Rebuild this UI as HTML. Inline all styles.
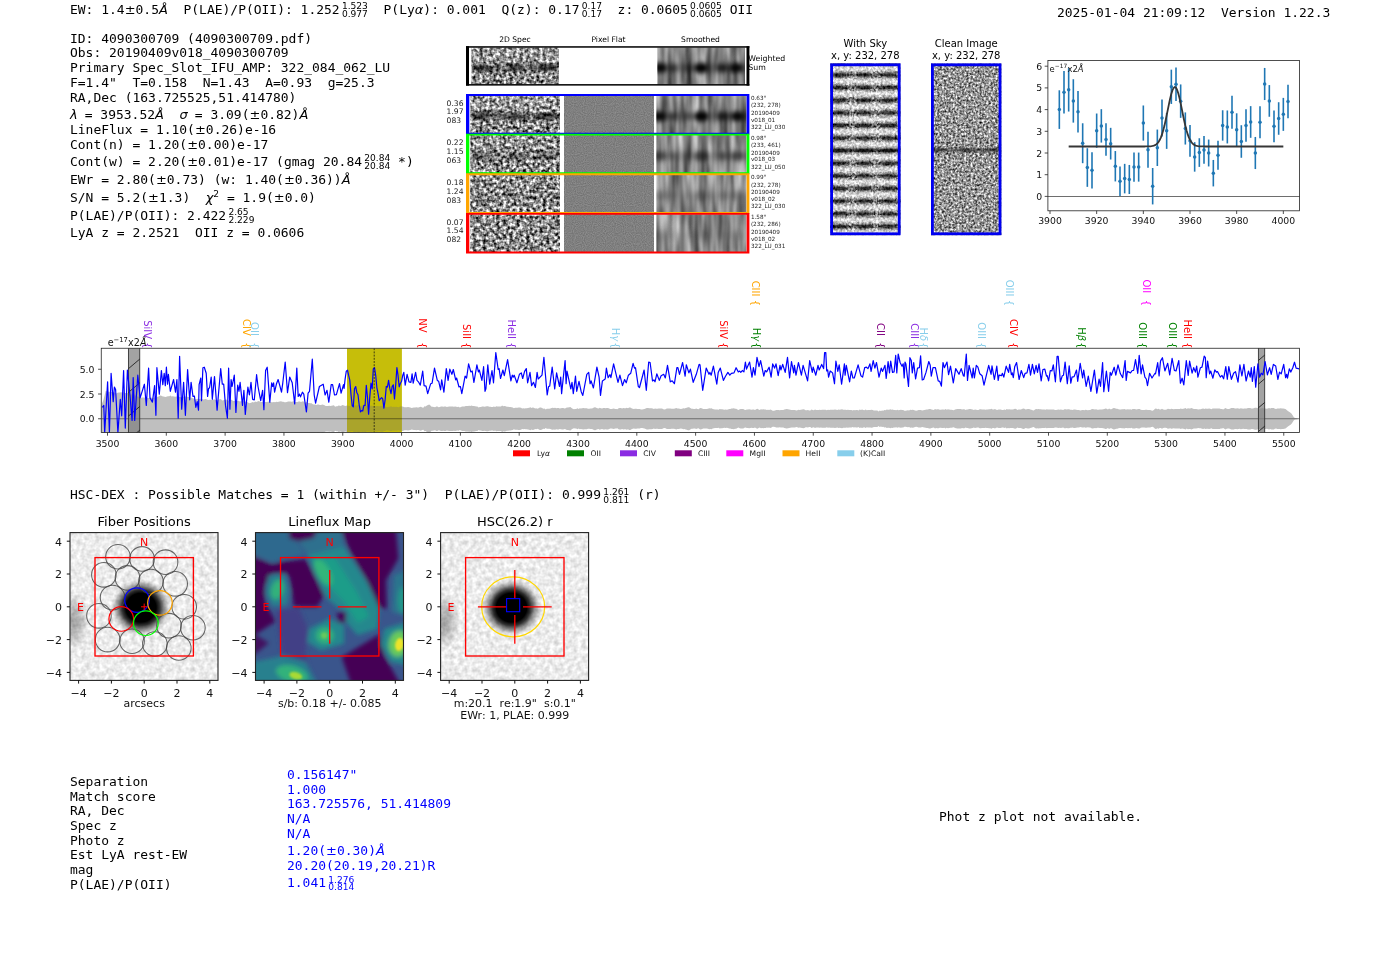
<!DOCTYPE html>
<html lang="en"><head><meta charset="utf-8"><title>ELiXer detection report 4090300709</title>
<style>
html,body{margin:0;padding:0;background:#fff;}
body{width:1400px;height:953px;overflow:hidden;}
svg{display:block;will-change:transform;}
.m{font-family:"DejaVu Sans Mono","Liberation Mono",monospace;}
.s{font-family:"DejaVu Sans","Liberation Sans",sans-serif;}
.si{font-family:"DejaVu Sans","Liberation Sans",sans-serif;font-style:oblique;}
</style></head><body>

<svg width="1400" height="953" viewBox="0 0 1400 953">

<rect width="1400" height="953" fill="#fff"/>

<g id="toptext">
<text x="70.00" y="13.90" class="m" font-size="12.975" fill="#000" xml:space="preserve">EW: 1.4</text><text x="124.68" y="13.90" class="s" font-size="12.975" fill="#000">±</text><text x="135.55" y="13.90" class="m" font-size="12.975" fill="#000" xml:space="preserve">0.5</text><text x="158.99" y="13.90" class="si" font-size="12.975" fill="#000">Å</text><text x="167.86" y="13.90" class="m" font-size="12.975" fill="#000" xml:space="preserve">  P(LAE)/P(OII): 1.252</text><text x="341.91" y="8.71" class="s" font-size="9.08" fill="#000">1.523</text><text x="341.91" y="16.69" class="s" font-size="9.08" fill="#000">0.977</text><text x="367.91" y="13.90" class="m" font-size="12.975" fill="#000" xml:space="preserve">  P(Ly</text><text x="414.78" y="13.90" class="si" font-size="12.975" fill="#000">α</text><text x="423.33" y="13.90" class="m" font-size="12.975" fill="#000" xml:space="preserve">): 0.001  Q(z): 0.17</text><text x="581.76" y="8.71" class="s" font-size="9.08" fill="#000">0.17</text><text x="581.76" y="16.69" class="s" font-size="9.08" fill="#000">0.17</text><text x="601.98" y="13.90" class="m" font-size="12.975" fill="#000" xml:space="preserve">  z: 0.0605</text><text x="690.11" y="8.71" class="s" font-size="9.08" fill="#000">0.0605</text><text x="690.11" y="16.69" class="s" font-size="9.08" fill="#000">0.0605</text><text x="721.89" y="13.90" class="m" font-size="12.975" fill="#000" xml:space="preserve"> OII</text>
<text x="1057.00" y="16.80" class="m" font-size="12.975" fill="#000" xml:space="preserve">2025-01-04 21:09:12  Version 1.22.3</text>
</g><g id="lefttext">
<text x="70.00" y="42.60" class="m" font-size="12.975" fill="#000" xml:space="preserve">ID: 4090300709 (4090300709.pdf)</text>
<text x="70.00" y="56.90" class="m" font-size="12.975" fill="#000" xml:space="preserve">Obs: 20190409v018_4090300709</text>
<text x="70.00" y="71.60" class="m" font-size="12.975" fill="#000" xml:space="preserve">Primary Spec_Slot_IFU_AMP: 322_084_062_LU</text>
<text x="70.00" y="86.70" class="m" font-size="12.975" fill="#000" xml:space="preserve">F=1.4"  T=0.158  N=1.43  A=0.93  g=25.3</text>
<text x="70.00" y="101.70" class="m" font-size="12.975" fill="#000" xml:space="preserve">RA,Dec (163.725525,51.414780)</text>
<text x="70.00" y="118.60" class="si" font-size="12.975" fill="#000">λ</text><text x="76.93" y="118.60" class="m" font-size="12.975" fill="#000" xml:space="preserve"> = 3953.52</text><text x="155.04" y="118.60" class="si" font-size="12.975" fill="#000">Å</text><text x="163.92" y="118.60" class="m" font-size="12.975" fill="#000" xml:space="preserve">  </text><text x="179.54" y="118.60" class="si" font-size="12.975" fill="#000">σ</text><text x="187.01" y="118.60" class="m" font-size="12.975" fill="#000" xml:space="preserve"> = 3.09(</text><text x="249.51" y="118.60" class="s" font-size="12.975" fill="#000">±</text><text x="260.38" y="118.60" class="m" font-size="12.975" fill="#000" xml:space="preserve">0.82)</text><text x="299.43" y="118.60" class="si" font-size="12.975" fill="#000">Å</text>
<text x="70.00" y="133.80" class="m" font-size="12.975" fill="#000" xml:space="preserve">LineFlux = 1.10(</text><text x="194.98" y="133.80" class="s" font-size="12.975" fill="#000">±</text><text x="205.85" y="133.80" class="m" font-size="12.975" fill="#000" xml:space="preserve">0.26)e-16</text>
<text x="70.00" y="148.50" class="m" font-size="12.975" fill="#000" xml:space="preserve">Cont(n) = 1.20(</text><text x="187.17" y="148.50" class="s" font-size="12.975" fill="#000">±</text><text x="198.04" y="148.50" class="m" font-size="12.975" fill="#000" xml:space="preserve">0.00)e-17</text>
<text x="70.00" y="166.40" class="m" font-size="12.975" fill="#000" xml:space="preserve">Cont(w) = 2.20(</text><text x="187.17" y="166.40" class="s" font-size="12.975" fill="#000">±</text><text x="198.04" y="166.40" class="m" font-size="12.975" fill="#000" xml:space="preserve">0.01)e-17 (gmag 20.84</text><text x="364.28" y="161.21" class="s" font-size="9.08" fill="#000">20.84</text><text x="364.28" y="169.19" class="s" font-size="9.08" fill="#000">20.84</text><text x="390.28" y="166.40" class="m" font-size="12.975" fill="#000" xml:space="preserve"> *)</text>
<text x="70.00" y="184.30" class="m" font-size="12.975" fill="#000" xml:space="preserve">EWr = 2.80(</text><text x="155.92" y="184.30" class="s" font-size="12.975" fill="#000">±</text><text x="166.80" y="184.30" class="m" font-size="12.975" fill="#000" xml:space="preserve">0.73) (w: 1.40(</text><text x="283.97" y="184.30" class="s" font-size="12.975" fill="#000">±</text><text x="294.84" y="184.30" class="m" font-size="12.975" fill="#000" xml:space="preserve">0.36))</text><text x="341.71" y="184.30" class="si" font-size="12.975" fill="#000">Å</text>
<text x="70.00" y="202.40" class="m" font-size="12.975" fill="#000" xml:space="preserve">S/N = 5.2(</text><text x="148.11" y="202.40" class="s" font-size="12.975" fill="#000">±</text><text x="158.99" y="202.40" class="m" font-size="12.975" fill="#000" xml:space="preserve">1.3)  </text><text x="205.85" y="202.40" class="si" font-size="12.975" fill="#000">χ</text><text x="213.35" y="197.21" class="s" font-size="9.08" fill="#000">2</text><text x="219.13" y="202.40" class="m" font-size="12.975" fill="#000" xml:space="preserve"> = 1.9(</text><text x="273.81" y="202.40" class="s" font-size="12.975" fill="#000">±</text><text x="284.68" y="202.40" class="m" font-size="12.975" fill="#000" xml:space="preserve">0.0)</text>
<text x="70.00" y="220.00" class="m" font-size="12.975" fill="#000" xml:space="preserve">P(LAE)/P(OII): 2.422</text><text x="228.43" y="214.81" class="s" font-size="9.08" fill="#000">2.65</text><text x="228.43" y="222.79" class="s" font-size="9.08" fill="#000">2.229</text>
<text x="70.00" y="236.50" class="m" font-size="12.975" fill="#000" xml:space="preserve">LyA z = 2.2521  OII z = 0.0606</text>
</g>
<defs>
<filter id="nzA" x="0" y="0" width="100%" height="100%" color-interpolation-filters="sRGB"><feTurbulence type="fractalNoise" baseFrequency="0.3 0.3" numOctaves="2" seed="3" stitchTiles="noStitch"/><feColorMatrix type="matrix" values="1.9 0 0 0 -0.4  1.9 0 0 0 -0.4  1.9 0 0 0 -0.4  0 0 0 0 1"/><feGaussianBlur stdDeviation="0.5"/></filter>
<filter id="nzB" x="0" y="0" width="100%" height="100%" color-interpolation-filters="sRGB"><feTurbulence type="fractalNoise" baseFrequency="0.3 0.3" numOctaves="2" seed="11" stitchTiles="noStitch"/><feColorMatrix type="matrix" values="1.9 0 0 0 -0.4  1.9 0 0 0 -0.4  1.9 0 0 0 -0.4  0 0 0 0 1"/><feGaussianBlur stdDeviation="0.5"/></filter>
<filter id="nzC" x="0" y="0" width="100%" height="100%" color-interpolation-filters="sRGB"><feTurbulence type="fractalNoise" baseFrequency="0.3 0.3" numOctaves="2" seed="23" stitchTiles="noStitch"/><feColorMatrix type="matrix" values="1.9 0 0 0 -0.4  1.9 0 0 0 -0.4  1.9 0 0 0 -0.4  0 0 0 0 1"/><feGaussianBlur stdDeviation="0.5"/></filter>
<filter id="nzD" x="0" y="0" width="100%" height="100%" color-interpolation-filters="sRGB"><feTurbulence type="fractalNoise" baseFrequency="0.3 0.3" numOctaves="2" seed="37" stitchTiles="noStitch"/><feColorMatrix type="matrix" values="1.9 0 0 0 -0.4  1.9 0 0 0 -0.4  1.9 0 0 0 -0.4  0 0 0 0 1"/><feGaussianBlur stdDeviation="0.5"/></filter>
<filter id="nzE" x="0" y="0" width="100%" height="100%" color-interpolation-filters="sRGB"><feTurbulence type="fractalNoise" baseFrequency="0.3 0.3" numOctaves="2" seed="41" stitchTiles="noStitch"/><feColorMatrix type="matrix" values="1.9 0 0 0 -0.4  1.9 0 0 0 -0.4  1.9 0 0 0 -0.4  0 0 0 0 1"/><feGaussianBlur stdDeviation="0.5"/></filter>
<filter id="nzFlat" x="0" y="0" width="100%" height="100%" color-interpolation-filters="sRGB"><feTurbulence type="fractalNoise" baseFrequency="0.9" numOctaves="1" seed="5" stitchTiles="noStitch"/><feColorMatrix type="matrix" values="0.22 0 0 0 0.39  0.22 0 0 0 0.39  0.22 0 0 0 0.39  0 0 0 0 1"/></filter>
<filter id="nzSm1" x="0" y="0" width="100%" height="100%" color-interpolation-filters="sRGB"><feTurbulence type="fractalNoise" baseFrequency="0.13 0.02" numOctaves="2" seed="7" stitchTiles="noStitch"/><feColorMatrix type="matrix" values="0.85 0 0 0 0.1  0.85 0 0 0 0.1  0.85 0 0 0 0.1  0 0 0 0 1"/></filter>
<filter id="nzSm2" x="0" y="0" width="100%" height="100%" color-interpolation-filters="sRGB"><feTurbulence type="fractalNoise" baseFrequency="0.13 0.02" numOctaves="2" seed="19" stitchTiles="noStitch"/><feColorMatrix type="matrix" values="0.85 0 0 0 0.1  0.85 0 0 0 0.1  0.85 0 0 0 0.1  0 0 0 0 1"/></filter>
<filter id="nzSm3" x="0" y="0" width="100%" height="100%" color-interpolation-filters="sRGB"><feTurbulence type="fractalNoise" baseFrequency="0.13 0.02" numOctaves="2" seed="29" stitchTiles="noStitch"/><feColorMatrix type="matrix" values="0.85 0 0 0 0.1  0.85 0 0 0 0.1  0.85 0 0 0 0.1  0 0 0 0 1"/></filter>
<filter id="nzSm4" x="0" y="0" width="100%" height="100%" color-interpolation-filters="sRGB"><feTurbulence type="fractalNoise" baseFrequency="0.13 0.02" numOctaves="2" seed="31" stitchTiles="noStitch"/><feColorMatrix type="matrix" values="0.85 0 0 0 0.1  0.85 0 0 0 0.1  0.85 0 0 0 0.1  0 0 0 0 1"/></filter>
<filter id="nzSm5" x="0" y="0" width="100%" height="100%" color-interpolation-filters="sRGB"><feTurbulence type="fractalNoise" baseFrequency="0.13 0.02" numOctaves="2" seed="43" stitchTiles="noStitch"/><feColorMatrix type="matrix" values="0.85 0 0 0 0.1  0.85 0 0 0 0.1  0.85 0 0 0 0.1  0 0 0 0 1"/></filter>
<filter id="nzSky" x="0" y="0" width="100%" height="100%" color-interpolation-filters="sRGB"><feTurbulence type="fractalNoise" baseFrequency="0.42" numOctaves="2" seed="13" stitchTiles="noStitch"/><feColorMatrix type="matrix" values="2.1 0 0 0 -0.47  2.1 0 0 0 -0.47  2.1 0 0 0 -0.47  0 0 0 0 1"/><feGaussianBlur stdDeviation="0.4"/></filter>
<filter id="nzClean" x="0" y="0" width="100%" height="100%" color-interpolation-filters="sRGB"><feTurbulence type="fractalNoise" baseFrequency="0.45" numOctaves="2" seed="17" stitchTiles="noStitch"/><feColorMatrix type="matrix" values="1.45 0 0 0 -0.14  1.45 0 0 0 -0.14  1.45 0 0 0 -0.14  0 0 0 0 1"/><feGaussianBlur stdDeviation="0.45"/></filter>
<filter id="nzHsc" x="0" y="0" width="100%" height="100%" color-interpolation-filters="sRGB"><feTurbulence type="fractalNoise" baseFrequency="0.22" numOctaves="2" seed="9" stitchTiles="noStitch"/><feColorMatrix type="matrix" values="0.3 0 0 0 0.775  0.3 0 0 0 0.775  0.3 0 0 0 0.775  0 0 0 0 1"/><feGaussianBlur stdDeviation="0.5"/></filter>
<filter id="blur2" x="-20%" y="-20%" width="140%" height="140%"><feGaussianBlur stdDeviation="2"/></filter>
<filter id="blur3" x="-20%" y="-20%" width="140%" height="140%"><feGaussianBlur stdDeviation="3.2"/></filter>
<filter id="blur1" x="-20%" y="-20%" width="140%" height="140%"><feGaussianBlur stdDeviation="1.2"/></filter>
<filter id="blurx" x="-20%" y="-50%" width="140%" height="200%"><feGaussianBlur stdDeviation="2.2 2.8"/></filter>
<radialGradient id="gal" cx="0.5" cy="0.5" r="0.5"><stop offset="0" stop-color="#000" stop-opacity="1"/><stop offset="0.5" stop-color="#000" stop-opacity="1"/><stop offset="0.62" stop-color="#000" stop-opacity="0.8"/><stop offset="0.76" stop-color="#000" stop-opacity="0.4"/><stop offset="0.9" stop-color="#000" stop-opacity="0.1"/><stop offset="1" stop-color="#000" stop-opacity="0"/></radialGradient>
<radialGradient id="gal2" cx="0.5" cy="0.5" r="0.5"><stop offset="0" stop-color="#000" stop-opacity="0.32"/><stop offset="0.5" stop-color="#000" stop-opacity="0.2"/><stop offset="1" stop-color="#000" stop-opacity="0"/></radialGradient>
</defs>
<g id="cutouts">
<text x="515.00" y="42.20" class="s" font-size="7.6" fill="#000" text-anchor="middle" >2D Spec</text>
<text x="608.50" y="42.20" class="s" font-size="7.6" fill="#000" text-anchor="middle" >Pixel Flat</text>
<text x="700.50" y="42.20" class="s" font-size="7.6" fill="#000" text-anchor="middle" >Smoothed</text>
<rect x="466.0" y="46.2" width="283.4" height="39.39999999999999" fill="#fff"/>
<clipPath id="cpc1"><rect x="471.40" y="47.40" width="87.60" height="37.20"/></clipPath><g clip-path="url(#cpc1)">
<rect x="471.40" y="47.40" width="87.60" height="37.20" filter="url(#nzA)"/>
<g filter="url(#blur1)"><rect x="466.40" y="63.86" width="97.60" height="8.0" fill="#000" opacity="0.25"/>
<ellipse cx="481.9" cy="67.9" rx="9.0" ry="3.8" fill="#000" opacity="0.47"/>
<ellipse cx="515.2" cy="67.9" rx="8.0" ry="3.8" fill="#000" opacity="0.47"/>
<ellipse cx="546.7" cy="67.9" rx="10.0" ry="3.8" fill="#000" opacity="0.47"/>
<ellipse cx="497.7" cy="67.9" rx="4.0" ry="3.8" fill="#000" opacity="0.19"/>
</g>
<rect x="471.40" y="47.40" width="87.60" height="14.46" fill="#fff" opacity="0.12"/>
</g>
<clipPath id="cpc2"><rect x="657.40" y="47.40" width="87.60" height="37.20"/></clipPath><g clip-path="url(#cpc2)">
<rect x="657.40" y="47.40" width="87.60" height="37.20" filter="url(#nzSm1)"/>
<g filter="url(#blurx)" opacity="1.00">
<rect x="651.4" y="63.4" width="99.6" height="9" fill="#000" opacity="0.28"/>
<ellipse cx="660.0" cy="67.9" rx="6.9" ry="5.1" fill="#000" opacity="0.95"/>
<ellipse cx="673.2" cy="67.9" rx="4.6" ry="3.4" fill="#000" opacity="0.45"/>
<ellipse cx="688.9" cy="67.9" rx="4.0" ry="3.0" fill="#000" opacity="0.35"/>
<ellipse cx="701.2" cy="67.9" rx="7.1" ry="5.3" fill="#000" opacity="1.0"/>
<ellipse cx="722.2" cy="67.9" rx="5.8" ry="4.2" fill="#000" opacity="0.7"/>
<ellipse cx="736.2" cy="67.9" rx="6.9" ry="5.1" fill="#000" opacity="0.95"/>
</g>
</g>
<rect x="466.0" y="46.2" width="3.0" height="39.39999999999999" fill="#000"/>
<rect x="746.5" y="46.2" width="2.9" height="39.39999999999999" fill="#000"/>
<rect x="466.0" y="46.2" width="283.4" height="1.5" fill="#000"/>
<rect x="466.0" y="84.1" width="283.4" height="1.5" fill="#000"/>
<text x="748.30" y="61.20" class="s" font-size="7.8" fill="#000" text-anchor="start" >Weighted</text>
<text x="748.30" y="69.90" class="s" font-size="7.8" fill="#000" text-anchor="start" >Sum</text>
<rect x="466.0" y="94.00" width="283.4" height="39.65" fill="#fff"/>
<clipPath id="cpc3"><rect x="470.30" y="95.20" width="89.70" height="38.45"/></clipPath><g clip-path="url(#cpc3)">
<rect x="470.30" y="95.20" width="89.70" height="38.45" filter="url(#nzB)"/>
<g filter="url(#blur1)"><rect x="465.30" y="112.35" width="99.70" height="8.0" fill="#000" opacity="0.25"/>
<ellipse cx="481.1" cy="116.3" rx="9.0" ry="3.8" fill="#000" opacity="0.47"/>
<ellipse cx="515.1" cy="116.3" rx="8.0" ry="3.8" fill="#000" opacity="0.47"/>
<ellipse cx="547.4" cy="116.3" rx="10.0" ry="3.8" fill="#000" opacity="0.47"/>
<ellipse cx="497.2" cy="116.3" rx="4.0" ry="3.8" fill="#000" opacity="0.19"/>
</g>
<rect x="470.30" y="95.20" width="89.70" height="15.15" fill="#fff" opacity="0.12"/>
</g>
<rect x="564" y="95.20" width="89.9" height="38.45" filter="url(#nzFlat)"/>
<clipPath id="cpc4"><rect x="656.40" y="95.20" width="90.00" height="38.45"/></clipPath><g clip-path="url(#cpc4)">
<rect x="656.40" y="95.20" width="90.00" height="38.45" filter="url(#nzSm2)"/>
<g filter="url(#blurx)" opacity="1.00">
<rect x="650.4" y="111.8" width="102.0" height="9" fill="#000" opacity="0.28"/>
<ellipse cx="659.1" cy="116.3" rx="6.9" ry="5.1" fill="#000" opacity="0.95"/>
<ellipse cx="672.6" cy="116.3" rx="4.6" ry="3.4" fill="#000" opacity="0.45"/>
<ellipse cx="688.8" cy="116.3" rx="4.0" ry="3.0" fill="#000" opacity="0.35"/>
<ellipse cx="701.4" cy="116.3" rx="7.1" ry="5.3" fill="#000" opacity="1.0"/>
<ellipse cx="723.0" cy="116.3" rx="5.8" ry="4.2" fill="#000" opacity="0.7"/>
<ellipse cx="737.4" cy="116.3" rx="6.9" ry="5.1" fill="#000" opacity="0.95"/>
</g>
</g>
<rect x="466.0" y="133.65" width="283.4" height="39.65" fill="#fff"/>
<clipPath id="cpc5"><rect x="470.30" y="134.85" width="89.70" height="38.45"/></clipPath><g clip-path="url(#cpc5)">
<rect x="470.30" y="134.85" width="89.70" height="38.45" filter="url(#nzC)"/>
<g filter="url(#blur1)"><rect x="465.30" y="152.00" width="99.70" height="8.0" fill="#000" opacity="0.14"/>
<ellipse cx="481.1" cy="156.0" rx="9.0" ry="3.8" fill="#000" opacity="0.27"/>
<ellipse cx="515.1" cy="156.0" rx="8.0" ry="3.8" fill="#000" opacity="0.27"/>
<ellipse cx="547.4" cy="156.0" rx="10.0" ry="3.8" fill="#000" opacity="0.27"/>
<ellipse cx="497.2" cy="156.0" rx="4.0" ry="3.8" fill="#000" opacity="0.11"/>
</g>
<rect x="470.30" y="134.85" width="89.70" height="15.15" fill="#fff" opacity="0.07"/>
</g>
<rect x="564" y="134.85" width="89.9" height="38.45" filter="url(#nzFlat)"/>
<clipPath id="cpc6"><rect x="656.40" y="134.85" width="90.00" height="38.45"/></clipPath><g clip-path="url(#cpc6)">
<rect x="656.40" y="134.85" width="90.00" height="38.45" filter="url(#nzSm3)"/>
<g filter="url(#blurx)" opacity="0.60">
<rect x="650.4" y="151.5" width="102.0" height="9" fill="#000" opacity="0.28"/>
<ellipse cx="659.1" cy="156.0" rx="6.9" ry="5.1" fill="#000" opacity="0.95"/>
<ellipse cx="672.6" cy="156.0" rx="4.6" ry="3.4" fill="#000" opacity="0.45"/>
<ellipse cx="688.8" cy="156.0" rx="4.0" ry="3.0" fill="#000" opacity="0.35"/>
<ellipse cx="701.4" cy="156.0" rx="7.1" ry="5.3" fill="#000" opacity="1.0"/>
<ellipse cx="723.0" cy="156.0" rx="5.8" ry="4.2" fill="#000" opacity="0.7"/>
<ellipse cx="737.4" cy="156.0" rx="6.9" ry="5.1" fill="#000" opacity="0.95"/>
</g>
</g>
<rect x="466.0" y="173.30" width="283.4" height="39.65" fill="#fff"/>
<clipPath id="cpc7"><rect x="470.30" y="174.50" width="89.70" height="38.45"/></clipPath><g clip-path="url(#cpc7)">
<rect x="470.30" y="174.50" width="89.70" height="38.45" filter="url(#nzD)"/>
<g filter="url(#blur1)"><rect x="465.30" y="191.65" width="99.70" height="8.0" fill="#000" opacity="0.04"/>
<ellipse cx="481.1" cy="195.6" rx="9.0" ry="3.8" fill="#000" opacity="0.08"/>
<ellipse cx="515.1" cy="195.6" rx="8.0" ry="3.8" fill="#000" opacity="0.08"/>
<ellipse cx="547.4" cy="195.6" rx="10.0" ry="3.8" fill="#000" opacity="0.08"/>
<ellipse cx="497.2" cy="195.6" rx="4.0" ry="3.8" fill="#000" opacity="0.03"/>
</g>
<rect x="470.30" y="174.50" width="89.70" height="15.15" fill="#fff" opacity="0.02"/>
</g>
<rect x="564" y="174.50" width="89.9" height="38.45" filter="url(#nzFlat)"/>
<clipPath id="cpc8"><rect x="656.40" y="174.50" width="90.00" height="38.45"/></clipPath><g clip-path="url(#cpc8)">
<rect x="656.40" y="174.50" width="90.00" height="38.45" filter="url(#nzSm4)"/>
<g filter="url(#blurx)" opacity="0.25">
<rect x="650.4" y="191.1" width="102.0" height="9" fill="#000" opacity="0.28"/>
<ellipse cx="659.1" cy="195.6" rx="6.9" ry="5.1" fill="#000" opacity="0.95"/>
<ellipse cx="672.6" cy="195.6" rx="4.6" ry="3.4" fill="#000" opacity="0.45"/>
<ellipse cx="688.8" cy="195.6" rx="4.0" ry="3.0" fill="#000" opacity="0.35"/>
<ellipse cx="701.4" cy="195.6" rx="7.1" ry="5.3" fill="#000" opacity="1.0"/>
<ellipse cx="723.0" cy="195.6" rx="5.8" ry="4.2" fill="#000" opacity="0.7"/>
<ellipse cx="737.4" cy="195.6" rx="6.9" ry="5.1" fill="#000" opacity="0.95"/>
</g>
</g>
<rect x="466.0" y="212.95" width="283.4" height="39.65" fill="#fff"/>
<clipPath id="cpc9"><rect x="470.30" y="214.15" width="89.70" height="38.45"/></clipPath><g clip-path="url(#cpc9)">
<rect x="470.30" y="214.15" width="89.70" height="38.45" filter="url(#nzE)"/>
</g>
<rect x="564" y="214.15" width="89.9" height="38.45" filter="url(#nzFlat)"/>
<clipPath id="cpc10"><rect x="656.40" y="214.15" width="90.00" height="38.45"/></clipPath><g clip-path="url(#cpc10)">
<rect x="656.40" y="214.15" width="90.00" height="38.45" filter="url(#nzSm5)"/>
<g filter="url(#blurx)" opacity="0.12">
<rect x="650.4" y="230.8" width="102.0" height="9" fill="#000" opacity="0.28"/>
<ellipse cx="659.1" cy="235.3" rx="6.9" ry="5.1" fill="#000" opacity="0.95"/>
<ellipse cx="672.6" cy="235.3" rx="4.6" ry="3.4" fill="#000" opacity="0.45"/>
<ellipse cx="688.8" cy="235.3" rx="4.0" ry="3.0" fill="#000" opacity="0.35"/>
<ellipse cx="701.4" cy="235.3" rx="7.1" ry="5.3" fill="#000" opacity="1.0"/>
<ellipse cx="723.0" cy="235.3" rx="5.8" ry="4.2" fill="#000" opacity="0.7"/>
<ellipse cx="737.4" cy="235.3" rx="6.9" ry="5.1" fill="#000" opacity="0.95"/>
</g>
</g>
<path fill="#0000ff" fill-rule="evenodd" d="M466.0,94.00H749.4V134.55H466.0Z M469.3,95.90H746.6V132.65H469.3Z"/>
<text x="446.60" y="105.60" class="s" font-size="7.6" fill="#222" text-anchor="start" >0.36</text>
<text x="446.60" y="114.45" class="s" font-size="7.6" fill="#222" text-anchor="start" >1.97</text>
<text x="446.60" y="123.30" class="s" font-size="7.6" fill="#222" text-anchor="start" >083</text>
<text x="750.90" y="100.00" class="s" font-size="5.7" fill="#222" text-anchor="start" >0.63"</text>
<text x="750.90" y="107.40" class="s" font-size="5.7" fill="#222" text-anchor="start" >(232, 278)</text>
<text x="750.90" y="114.90" class="s" font-size="5.7" fill="#222" text-anchor="start" >20190409</text>
<text x="750.90" y="121.70" class="s" font-size="5.7" fill="#222" text-anchor="start" >v018_01</text>
<text x="750.90" y="129.10" class="s" font-size="5.7" fill="#222" text-anchor="start" >322_LU_030</text>
<path fill="#00ff00" fill-rule="evenodd" d="M466.0,133.65H749.4V174.20H466.0Z M469.3,135.55H746.6V172.30H469.3Z"/>
<text x="446.60" y="145.25" class="s" font-size="7.6" fill="#222" text-anchor="start" >0.22</text>
<text x="446.60" y="154.10" class="s" font-size="7.6" fill="#222" text-anchor="start" >1.15</text>
<text x="446.60" y="162.95" class="s" font-size="7.6" fill="#222" text-anchor="start" >063</text>
<text x="750.90" y="139.65" class="s" font-size="5.7" fill="#222" text-anchor="start" >0.98"</text>
<text x="750.90" y="147.05" class="s" font-size="5.7" fill="#222" text-anchor="start" >(233, 461)</text>
<text x="750.90" y="154.55" class="s" font-size="5.7" fill="#222" text-anchor="start" >20190409</text>
<text x="750.90" y="161.35" class="s" font-size="5.7" fill="#222" text-anchor="start" >v018_03</text>
<text x="750.90" y="168.75" class="s" font-size="5.7" fill="#222" text-anchor="start" >322_LU_050</text>
<path fill="#ffa500" fill-rule="evenodd" d="M466.0,173.30H749.4V213.85H466.0Z M469.3,175.20H746.6V211.95H469.3Z"/>
<text x="446.60" y="184.90" class="s" font-size="7.6" fill="#222" text-anchor="start" >0.18</text>
<text x="446.60" y="193.75" class="s" font-size="7.6" fill="#222" text-anchor="start" >1.24</text>
<text x="446.60" y="202.60" class="s" font-size="7.6" fill="#222" text-anchor="start" >083</text>
<text x="750.90" y="179.30" class="s" font-size="5.7" fill="#222" text-anchor="start" >0.99"</text>
<text x="750.90" y="186.70" class="s" font-size="5.7" fill="#222" text-anchor="start" >(232, 278)</text>
<text x="750.90" y="194.20" class="s" font-size="5.7" fill="#222" text-anchor="start" >20190409</text>
<text x="750.90" y="201.00" class="s" font-size="5.7" fill="#222" text-anchor="start" >v018_02</text>
<text x="750.90" y="208.40" class="s" font-size="5.7" fill="#222" text-anchor="start" >322_LU_030</text>
<path fill="#ff0000" fill-rule="evenodd" d="M466.0,212.95H749.4V253.50H466.0Z M469.3,214.85H746.6V251.60H469.3Z"/>
<text x="446.60" y="224.55" class="s" font-size="7.6" fill="#222" text-anchor="start" >0.07</text>
<text x="446.60" y="233.40" class="s" font-size="7.6" fill="#222" text-anchor="start" >1.54</text>
<text x="446.60" y="242.25" class="s" font-size="7.6" fill="#222" text-anchor="start" >082</text>
<text x="750.90" y="218.95" class="s" font-size="5.7" fill="#222" text-anchor="start" >1.58"</text>
<text x="750.90" y="226.35" class="s" font-size="5.7" fill="#222" text-anchor="start" >(232, 286)</text>
<text x="750.90" y="233.85" class="s" font-size="5.7" fill="#222" text-anchor="start" >20190409</text>
<text x="750.90" y="240.65" class="s" font-size="5.7" fill="#222" text-anchor="start" >v018_02</text>
<text x="750.90" y="248.05" class="s" font-size="5.7" fill="#222" text-anchor="start" >322_LU_031</text>
</g>
<g id="skyclean">
<text x="865.30" y="47.40" class="s" font-size="10.0" fill="#000" text-anchor="middle" >With Sky</text>
<text x="865.30" y="58.60" class="s" font-size="10.0" fill="#000" text-anchor="middle" >x, y: 232, 278</text>
<text x="966.20" y="47.40" class="s" font-size="10.0" fill="#000" text-anchor="middle" >Clean Image</text>
<text x="966.20" y="58.60" class="s" font-size="10.0" fill="#000" text-anchor="middle" >x, y: 232, 278</text>
<clipPath id="cpSky"><rect x="830.2" y="63.4" width="70.39999999999998" height="171.79999999999998"/></clipPath>
<g clip-path="url(#cpSky)">
<rect x="830.2" y="63.4" width="70.39999999999998" height="171.79999999999998" filter="url(#nzSky)"/>
<g filter="url(#blur1)"><rect x="826.2" y="59.58" width="78.39999999999998" height="5.6" fill="#000" opacity="0.3"/><rect x="826.2" y="65.79" width="78.39999999999998" height="5.8" fill="#fff" opacity="0.68"/><ellipse cx="839.4" cy="62.38" rx="8.5" ry="3.4" fill="#000" opacity="0.6"/><ellipse cx="864.0" cy="62.38" rx="8.5" ry="3.4" fill="#000" opacity="0.6"/><ellipse cx="888.6" cy="62.38" rx="8.5" ry="3.4" fill="#000" opacity="0.6"/><rect x="826.2" y="72.20" width="78.39999999999998" height="5.6" fill="#000" opacity="0.3"/><rect x="826.2" y="78.41" width="78.39999999999998" height="5.8" fill="#fff" opacity="0.68"/><ellipse cx="839.4" cy="75.00" rx="8.5" ry="3.4" fill="#000" opacity="0.6"/><ellipse cx="864.0" cy="75.00" rx="8.5" ry="3.4" fill="#000" opacity="0.6"/><ellipse cx="888.6" cy="75.00" rx="8.5" ry="3.4" fill="#000" opacity="0.6"/><rect x="826.2" y="84.82" width="78.39999999999998" height="5.6" fill="#000" opacity="0.3"/><rect x="826.2" y="91.03" width="78.39999999999998" height="5.8" fill="#fff" opacity="0.68"/><ellipse cx="839.4" cy="87.62" rx="8.5" ry="3.4" fill="#000" opacity="0.6"/><ellipse cx="864.0" cy="87.62" rx="8.5" ry="3.4" fill="#000" opacity="0.6"/><ellipse cx="888.6" cy="87.62" rx="8.5" ry="3.4" fill="#000" opacity="0.6"/><rect x="826.2" y="97.44" width="78.39999999999998" height="5.6" fill="#000" opacity="0.3"/><rect x="826.2" y="103.65" width="78.39999999999998" height="5.8" fill="#fff" opacity="0.68"/><ellipse cx="839.4" cy="100.24" rx="8.5" ry="3.4" fill="#000" opacity="0.6"/><ellipse cx="864.0" cy="100.24" rx="8.5" ry="3.4" fill="#000" opacity="0.6"/><ellipse cx="888.6" cy="100.24" rx="8.5" ry="3.4" fill="#000" opacity="0.6"/><rect x="826.2" y="110.06" width="78.39999999999998" height="5.6" fill="#000" opacity="0.3"/><rect x="826.2" y="116.27" width="78.39999999999998" height="5.8" fill="#fff" opacity="0.68"/><ellipse cx="839.4" cy="112.86" rx="8.5" ry="3.4" fill="#000" opacity="0.6"/><ellipse cx="864.0" cy="112.86" rx="8.5" ry="3.4" fill="#000" opacity="0.6"/><ellipse cx="888.6" cy="112.86" rx="8.5" ry="3.4" fill="#000" opacity="0.6"/><rect x="826.2" y="122.68" width="78.39999999999998" height="5.6" fill="#000" opacity="0.3"/><rect x="826.2" y="128.89" width="78.39999999999998" height="5.8" fill="#fff" opacity="0.68"/><ellipse cx="839.4" cy="125.48" rx="8.5" ry="3.4" fill="#000" opacity="0.6"/><ellipse cx="864.0" cy="125.48" rx="8.5" ry="3.4" fill="#000" opacity="0.6"/><ellipse cx="888.6" cy="125.48" rx="8.5" ry="3.4" fill="#000" opacity="0.6"/><rect x="826.2" y="135.30" width="78.39999999999998" height="5.6" fill="#000" opacity="0.3"/><rect x="826.2" y="141.51" width="78.39999999999998" height="5.8" fill="#fff" opacity="0.68"/><ellipse cx="839.4" cy="138.10" rx="8.5" ry="3.4" fill="#000" opacity="0.6"/><ellipse cx="864.0" cy="138.10" rx="8.5" ry="3.4" fill="#000" opacity="0.6"/><ellipse cx="888.6" cy="138.10" rx="8.5" ry="3.4" fill="#000" opacity="0.6"/><rect x="826.2" y="147.92" width="78.39999999999998" height="5.6" fill="#000" opacity="0.3"/><rect x="826.2" y="154.13" width="78.39999999999998" height="5.8" fill="#fff" opacity="0.68"/><ellipse cx="839.4" cy="150.72" rx="8.5" ry="3.4" fill="#000" opacity="0.6"/><ellipse cx="864.0" cy="150.72" rx="8.5" ry="3.4" fill="#000" opacity="0.6"/><ellipse cx="888.6" cy="150.72" rx="8.5" ry="3.4" fill="#000" opacity="0.6"/><rect x="826.2" y="160.54" width="78.39999999999998" height="5.6" fill="#000" opacity="0.3"/><rect x="826.2" y="166.75" width="78.39999999999998" height="5.8" fill="#fff" opacity="0.68"/><ellipse cx="839.4" cy="163.34" rx="8.5" ry="3.4" fill="#000" opacity="0.6"/><ellipse cx="864.0" cy="163.34" rx="8.5" ry="3.4" fill="#000" opacity="0.6"/><ellipse cx="888.6" cy="163.34" rx="8.5" ry="3.4" fill="#000" opacity="0.6"/><rect x="826.2" y="173.16" width="78.39999999999998" height="5.6" fill="#000" opacity="0.3"/><rect x="826.2" y="179.37" width="78.39999999999998" height="5.8" fill="#fff" opacity="0.68"/><ellipse cx="839.4" cy="175.96" rx="8.5" ry="3.4" fill="#000" opacity="0.6"/><ellipse cx="864.0" cy="175.96" rx="8.5" ry="3.4" fill="#000" opacity="0.6"/><ellipse cx="888.6" cy="175.96" rx="8.5" ry="3.4" fill="#000" opacity="0.6"/><rect x="826.2" y="185.78" width="78.39999999999998" height="5.6" fill="#000" opacity="0.3"/><rect x="826.2" y="191.99" width="78.39999999999998" height="5.8" fill="#fff" opacity="0.68"/><ellipse cx="839.4" cy="188.58" rx="8.5" ry="3.4" fill="#000" opacity="0.6"/><ellipse cx="864.0" cy="188.58" rx="8.5" ry="3.4" fill="#000" opacity="0.6"/><ellipse cx="888.6" cy="188.58" rx="8.5" ry="3.4" fill="#000" opacity="0.6"/><rect x="826.2" y="198.40" width="78.39999999999998" height="5.6" fill="#000" opacity="0.3"/><rect x="826.2" y="204.61" width="78.39999999999998" height="5.8" fill="#fff" opacity="0.68"/><ellipse cx="839.4" cy="201.20" rx="8.5" ry="3.4" fill="#000" opacity="0.6"/><ellipse cx="864.0" cy="201.20" rx="8.5" ry="3.4" fill="#000" opacity="0.6"/><ellipse cx="888.6" cy="201.20" rx="8.5" ry="3.4" fill="#000" opacity="0.6"/><rect x="826.2" y="211.02" width="78.39999999999998" height="5.6" fill="#000" opacity="0.3"/><rect x="826.2" y="217.23" width="78.39999999999998" height="5.8" fill="#fff" opacity="0.68"/><ellipse cx="839.4" cy="213.82" rx="8.5" ry="3.4" fill="#000" opacity="0.6"/><ellipse cx="864.0" cy="213.82" rx="8.5" ry="3.4" fill="#000" opacity="0.6"/><ellipse cx="888.6" cy="213.82" rx="8.5" ry="3.4" fill="#000" opacity="0.6"/><rect x="826.2" y="223.64" width="78.39999999999998" height="5.6" fill="#000" opacity="0.3"/><rect x="826.2" y="229.85" width="78.39999999999998" height="5.8" fill="#fff" opacity="0.68"/><ellipse cx="839.4" cy="226.44" rx="8.5" ry="3.4" fill="#000" opacity="0.6"/><ellipse cx="864.0" cy="226.44" rx="8.5" ry="3.4" fill="#000" opacity="0.6"/><ellipse cx="888.6" cy="226.44" rx="8.5" ry="3.4" fill="#000" opacity="0.6"/><rect x="826.2" y="236.26" width="78.39999999999998" height="5.6" fill="#000" opacity="0.3"/><rect x="826.2" y="242.47" width="78.39999999999998" height="5.8" fill="#fff" opacity="0.68"/><ellipse cx="839.4" cy="239.06" rx="8.5" ry="3.4" fill="#000" opacity="0.6"/><ellipse cx="864.0" cy="239.06" rx="8.5" ry="3.4" fill="#000" opacity="0.6"/><ellipse cx="888.6" cy="239.06" rx="8.5" ry="3.4" fill="#000" opacity="0.6"/><rect x="826.2" y="147.4" width="78.39999999999998" height="5.6" fill="#000" opacity="0.45"/></g>
</g>
<rect x="831.6" y="64.8" width="67.59999999999998" height="168.99999999999997" fill="none" stroke="#0000f0" stroke-width="2.8"/>
<clipPath id="cpClean"><rect x="931.0" y="63.4" width="70.39999999999998" height="171.79999999999998"/></clipPath><g clip-path="url(#cpClean)">
<rect x="931.0" y="63.4" width="70.39999999999998" height="171.79999999999998" filter="url(#nzClean)"/>
<g filter="url(#blur1)"><rect x="926.0" y="148.2" width="80.39999999999998" height="3.6" fill="#000" opacity="0.45"/>
<ellipse cx="938.0" cy="150" rx="7" ry="2.6" fill="#000" opacity="0.35"/>
<ellipse cx="966.2" cy="150" rx="7" ry="2.6" fill="#000" opacity="0.35"/>
<ellipse cx="994.4" cy="150" rx="7" ry="2.6" fill="#000" opacity="0.35"/>
</g></g>
<rect x="932.4" y="64.8" width="67.59999999999998" height="168.99999999999997" fill="none" stroke="#0000f0" stroke-width="2.8"/>
</g>
<g id="fit">
<rect x="1047.9" y="60.4" width="251.69999999999982" height="150.4" fill="#fff"/>
<line x1="1047.9" y1="196.40" x2="1299.6" y2="196.40" stroke="#000" stroke-width="0.8" opacity="0.8"/>
<g stroke="#1f77b4" stroke-width="1.6" fill="#1f77b4"><line x1="1059.33" y1="90.29" x2="1059.33" y2="128.91"/><line x1="1064.00" y1="70.97" x2="1064.00" y2="113.51"/><line x1="1068.67" y1="68.15" x2="1068.67" y2="111.55"/><line x1="1073.33" y1="79.22" x2="1073.33" y2="122.62"/><line x1="1078.00" y1="90.94" x2="1078.00" y2="132.60"/><line x1="1082.67" y1="123.27" x2="1082.67" y2="163.20"/><line x1="1087.33" y1="148.23" x2="1087.33" y2="186.85"/><line x1="1092.00" y1="152.13" x2="1092.00" y2="188.59"/><line x1="1096.67" y1="113.51" x2="1096.67" y2="147.79"/><line x1="1101.33" y1="109.17" x2="1101.33" y2="142.58"/><line x1="1106.00" y1="123.27" x2="1106.00" y2="155.82"/><line x1="1110.67" y1="127.83" x2="1110.67" y2="159.51"/><line x1="1115.33" y1="151.05" x2="1115.33" y2="181.43"/><line x1="1120.00" y1="166.45" x2="1120.00" y2="195.97"/><line x1="1124.67" y1="163.85" x2="1124.67" y2="193.36"/><line x1="1129.33" y1="164.94" x2="1129.33" y2="194.01"/><line x1="1134.00" y1="152.57" x2="1134.00" y2="181.64"/><line x1="1138.67" y1="152.57" x2="1138.67" y2="181.64"/><line x1="1143.33" y1="105.48" x2="1143.33" y2="140.63"/><line x1="1148.00" y1="131.73" x2="1148.00" y2="167.76"/><line x1="1152.67" y1="167.97" x2="1152.67" y2="204.43"/><line x1="1157.33" y1="129.56" x2="1157.33" y2="166.02"/><line x1="1162.00" y1="99.62" x2="1162.00" y2="136.51"/><line x1="1166.66" y1="112.86" x2="1166.66" y2="148.88"/><line x1="1171.33" y1="69.67" x2="1171.33" y2="103.96"/><line x1="1176.00" y1="67.50" x2="1176.00" y2="100.92"/><line x1="1180.66" y1="84.43" x2="1180.66" y2="117.85"/><line x1="1185.33" y1="112.42" x2="1185.33" y2="144.54"/><line x1="1190.00" y1="125.01" x2="1190.00" y2="156.69"/><line x1="1194.66" y1="142.15" x2="1194.66" y2="171.66"/><line x1="1199.33" y1="138.24" x2="1199.33" y2="166.89"/><line x1="1204.00" y1="136.07" x2="1204.00" y2="163.85"/><line x1="1208.66" y1="139.55" x2="1208.66" y2="166.45"/><line x1="1213.33" y1="159.94" x2="1213.33" y2="186.42"/><line x1="1218.00" y1="140.63" x2="1218.00" y2="169.71"/><line x1="1222.66" y1="110.25" x2="1222.66" y2="140.63"/><line x1="1227.33" y1="110.47" x2="1227.33" y2="143.45"/><line x1="1232.00" y1="95.71" x2="1232.00" y2="128.70"/><line x1="1236.66" y1="113.29" x2="1236.66" y2="146.27"/><line x1="1241.33" y1="125.22" x2="1241.33" y2="157.77"/><line x1="1246.00" y1="109.17" x2="1246.00" y2="141.72"/><line x1="1250.66" y1="106.13" x2="1250.66" y2="137.81"/><line x1="1255.33" y1="136.94" x2="1255.33" y2="169.06"/><line x1="1260.00" y1="106.13" x2="1260.00" y2="138.24"/><line x1="1264.66" y1="67.94" x2="1264.66" y2="100.05"/><line x1="1269.33" y1="85.08" x2="1269.33" y2="116.76"/><line x1="1274.00" y1="110.47" x2="1274.00" y2="142.15"/><line x1="1278.66" y1="102.22" x2="1278.66" y2="134.77"/><line x1="1283.33" y1="97.88" x2="1283.33" y2="130.87"/><line x1="1288.00" y1="84.86" x2="1288.00" y2="118.28"/></g><g fill="#1f77b4"><circle cx="1059.33" cy="109.60" r="1.75"/><circle cx="1064.00" cy="92.24" r="1.75"/><circle cx="1068.67" cy="89.85" r="1.75"/><circle cx="1073.33" cy="100.92" r="1.75"/><circle cx="1078.00" cy="111.77" r="1.75"/><circle cx="1082.67" cy="143.24" r="1.75"/><circle cx="1087.33" cy="167.54" r="1.75"/><circle cx="1092.00" cy="170.36" r="1.75"/><circle cx="1096.67" cy="130.65" r="1.75"/><circle cx="1101.33" cy="125.88" r="1.75"/><circle cx="1106.00" cy="139.55" r="1.75"/><circle cx="1110.67" cy="143.67" r="1.75"/><circle cx="1115.33" cy="166.24" r="1.75"/><circle cx="1120.00" cy="181.21" r="1.75"/><circle cx="1124.67" cy="178.61" r="1.75"/><circle cx="1129.33" cy="179.47" r="1.75"/><circle cx="1134.00" cy="167.11" r="1.75"/><circle cx="1138.67" cy="167.11" r="1.75"/><circle cx="1143.33" cy="123.05" r="1.75"/><circle cx="1148.00" cy="149.75" r="1.75"/><circle cx="1152.67" cy="186.20" r="1.75"/><circle cx="1157.33" cy="147.79" r="1.75"/><circle cx="1162.00" cy="118.06" r="1.75"/><circle cx="1166.66" cy="130.87" r="1.75"/><circle cx="1171.33" cy="86.82" r="1.75"/><circle cx="1176.00" cy="84.21" r="1.75"/><circle cx="1180.66" cy="101.14" r="1.75"/><circle cx="1185.33" cy="128.48" r="1.75"/><circle cx="1190.00" cy="140.85" r="1.75"/><circle cx="1194.66" cy="156.91" r="1.75"/><circle cx="1199.33" cy="152.57" r="1.75"/><circle cx="1204.00" cy="149.96" r="1.75"/><circle cx="1208.66" cy="153.00" r="1.75"/><circle cx="1213.33" cy="173.18" r="1.75"/><circle cx="1218.00" cy="155.17" r="1.75"/><circle cx="1222.66" cy="125.44" r="1.75"/><circle cx="1227.33" cy="126.96" r="1.75"/><circle cx="1232.00" cy="112.20" r="1.75"/><circle cx="1236.66" cy="129.78" r="1.75"/><circle cx="1241.33" cy="141.50" r="1.75"/><circle cx="1246.00" cy="125.44" r="1.75"/><circle cx="1250.66" cy="121.97" r="1.75"/><circle cx="1255.33" cy="153.00" r="1.75"/><circle cx="1260.00" cy="122.19" r="1.75"/><circle cx="1264.66" cy="83.99" r="1.75"/><circle cx="1269.33" cy="100.92" r="1.75"/><circle cx="1274.00" cy="126.31" r="1.75"/><circle cx="1278.66" cy="118.50" r="1.75"/><circle cx="1283.33" cy="114.37" r="1.75"/><circle cx="1288.00" cy="101.57" r="1.75"/></g>
<polyline points="1068.67,146.49 1069.83,146.49 1071.00,146.49 1072.17,146.49 1073.33,146.49 1074.50,146.49 1075.67,146.49 1076.83,146.49 1078.00,146.49 1079.17,146.49 1080.33,146.49 1081.50,146.49 1082.67,146.49 1083.83,146.49 1085.00,146.49 1086.17,146.49 1087.33,146.49 1088.50,146.49 1089.67,146.49 1090.83,146.49 1092.00,146.49 1093.17,146.49 1094.33,146.49 1095.50,146.49 1096.67,146.49 1097.83,146.49 1099.00,146.49 1100.17,146.49 1101.33,146.49 1102.50,146.49 1103.67,146.49 1104.83,146.49 1106.00,146.49 1107.17,146.49 1108.33,146.49 1109.50,146.49 1110.67,146.49 1111.83,146.49 1113.00,146.49 1114.17,146.49 1115.33,146.49 1116.50,146.49 1117.67,146.49 1118.83,146.49 1120.00,146.49 1121.17,146.49 1122.33,146.49 1123.50,146.49 1124.67,146.49 1125.83,146.49 1127.00,146.49 1128.17,146.49 1129.33,146.49 1130.50,146.49 1131.67,146.49 1132.83,146.49 1134.00,146.49 1135.17,146.49 1136.33,146.49 1137.50,146.49 1138.67,146.49 1139.83,146.49 1141.00,146.49 1142.17,146.49 1143.33,146.49 1144.50,146.48 1145.67,146.47 1146.83,146.46 1148.00,146.43 1149.17,146.39 1150.33,146.31 1151.50,146.18 1152.67,145.97 1153.83,145.65 1155.00,145.16 1156.17,144.44 1157.33,143.41 1158.50,141.99 1159.67,140.07 1160.83,137.58 1162.00,134.43 1163.17,130.60 1164.33,126.09 1165.50,120.98 1166.66,115.41 1167.83,109.61 1169.00,103.85 1170.16,98.47 1171.33,93.81 1172.50,90.18 1173.66,87.87 1174.83,87.03 1176.00,87.75 1177.16,89.95 1178.33,93.48 1179.50,98.07 1180.66,103.40 1181.83,109.14 1183.00,114.96 1184.16,120.55 1185.33,125.70 1186.50,130.26 1187.66,134.15 1188.83,137.35 1190.00,139.89 1191.16,141.85 1192.33,143.31 1193.50,144.37 1194.66,145.11 1195.83,145.62 1197.00,145.95 1198.16,146.17 1199.33,146.30 1200.50,146.38 1201.66,146.43 1202.83,146.46 1204.00,146.47 1205.16,146.48 1206.33,146.49 1207.50,146.49 1208.66,146.49 1209.83,146.49 1211.00,146.49 1212.16,146.49 1213.33,146.49 1214.50,146.49 1215.66,146.49 1216.83,146.49 1218.00,146.49 1219.16,146.49 1220.33,146.49 1221.50,146.49 1222.66,146.49 1223.83,146.49 1225.00,146.49 1226.16,146.49 1227.33,146.49 1228.50,146.49 1229.66,146.49 1230.83,146.49 1232.00,146.49 1233.16,146.49 1234.33,146.49 1235.50,146.49 1236.66,146.49 1237.83,146.49 1239.00,146.49 1240.16,146.49 1241.33,146.49 1242.50,146.49 1243.66,146.49 1244.83,146.49 1246.00,146.49 1247.16,146.49 1248.33,146.49 1249.50,146.49 1250.66,146.49 1251.83,146.49 1253.00,146.49 1254.16,146.49 1255.33,146.49 1256.50,146.49 1257.66,146.49 1258.83,146.49 1260.00,146.49 1261.16,146.49 1262.33,146.49 1263.50,146.49 1264.66,146.49 1265.83,146.49 1267.00,146.49 1268.16,146.49 1269.33,146.49 1270.50,146.49 1271.66,146.49 1272.83,146.49 1274.00,146.49 1275.16,146.49 1276.33,146.49 1277.50,146.49 1278.66,146.49 1279.83,146.49 1281.00,146.49 1282.16,146.49 1283.33,146.49" fill="none" stroke="#363636" stroke-width="1.8" stroke-linejoin="round"/>
<rect x="1047.9" y="60.4" width="251.69999999999982" height="150.4" fill="none" stroke="#222" stroke-width="0.8"/>
<line x1="1050.00" y1="210.8" x2="1050.00" y2="214.0" stroke="#222" stroke-width="0.8"/>
<text x="1050.00" y="224.40" class="s" font-size="9.3" fill="#111" text-anchor="middle" >3900</text>
<line x1="1096.67" y1="210.8" x2="1096.67" y2="214.0" stroke="#222" stroke-width="0.8"/>
<text x="1096.67" y="224.40" class="s" font-size="9.3" fill="#111" text-anchor="middle" >3920</text>
<line x1="1143.33" y1="210.8" x2="1143.33" y2="214.0" stroke="#222" stroke-width="0.8"/>
<text x="1143.33" y="224.40" class="s" font-size="9.3" fill="#111" text-anchor="middle" >3940</text>
<line x1="1190.00" y1="210.8" x2="1190.00" y2="214.0" stroke="#222" stroke-width="0.8"/>
<text x="1190.00" y="224.40" class="s" font-size="9.3" fill="#111" text-anchor="middle" >3960</text>
<line x1="1236.66" y1="210.8" x2="1236.66" y2="214.0" stroke="#222" stroke-width="0.8"/>
<text x="1236.66" y="224.40" class="s" font-size="9.3" fill="#111" text-anchor="middle" >3980</text>
<line x1="1283.33" y1="210.8" x2="1283.33" y2="214.0" stroke="#222" stroke-width="0.8"/>
<text x="1283.33" y="224.40" class="s" font-size="9.3" fill="#111" text-anchor="middle" >4000</text>
<line x1="1044.7" y1="196.40" x2="1047.9" y2="196.40" stroke="#222" stroke-width="0.8"/>
<text x="1042.10" y="199.90" class="s" font-size="9.3" fill="#111" text-anchor="end" >0</text>
<line x1="1044.7" y1="174.70" x2="1047.9" y2="174.70" stroke="#222" stroke-width="0.8"/>
<text x="1042.10" y="178.20" class="s" font-size="9.3" fill="#111" text-anchor="end" >1</text>
<line x1="1044.7" y1="153.00" x2="1047.9" y2="153.00" stroke="#222" stroke-width="0.8"/>
<text x="1042.10" y="156.50" class="s" font-size="9.3" fill="#111" text-anchor="end" >2</text>
<line x1="1044.7" y1="131.30" x2="1047.9" y2="131.30" stroke="#222" stroke-width="0.8"/>
<text x="1042.10" y="134.80" class="s" font-size="9.3" fill="#111" text-anchor="end" >3</text>
<line x1="1044.7" y1="109.60" x2="1047.9" y2="109.60" stroke="#222" stroke-width="0.8"/>
<text x="1042.10" y="113.10" class="s" font-size="9.3" fill="#111" text-anchor="end" >4</text>
<line x1="1044.7" y1="87.90" x2="1047.9" y2="87.90" stroke="#222" stroke-width="0.8"/>
<text x="1042.10" y="91.40" class="s" font-size="9.3" fill="#111" text-anchor="end" >5</text>
<line x1="1044.7" y1="66.20" x2="1047.9" y2="66.20" stroke="#222" stroke-width="0.8"/>
<text x="1042.10" y="69.70" class="s" font-size="9.3" fill="#111" text-anchor="end" >6</text>
<text x="1049.60" y="71.60" class="s" font-size="8.4" fill="#111">e</text><text x="1054.77" y="68.24" class="s" font-size="5.88" fill="#111">−17</text><text x="1067.48" y="71.60" class="s" font-size="8.4" fill="#111">x2</text><text x="1077.79" y="71.60" class="si" font-size="8.4" fill="#111">Å</text>
</g>
<g id="spectrum">
<text transform="translate(144.2,348.6) rotate(90)" class="s" font-size="10" fill="#8a2be2" text-anchor="end" xml:space="preserve">SiIV {</text>
<text transform="translate(242.6,348.6) rotate(90)" class="s" font-size="10" fill="#ffa500" text-anchor="end" xml:space="preserve">CIV  {</text>
<text transform="translate(251.4,348.6) rotate(90)" class="s" font-size="10" fill="#87ceeb" text-anchor="end" xml:space="preserve">OII  {</text>
<text transform="translate(419.0,348.6) rotate(90)" class="s" font-size="10" fill="#ff0000" text-anchor="end" xml:space="preserve">NV   {</text>
<text transform="translate(462.8,348.6) rotate(90)" class="s" font-size="10" fill="#ff0000" text-anchor="end" xml:space="preserve">SiII {</text>
<text transform="translate(507.8,348.6) rotate(90)" class="s" font-size="10" fill="#8a2be2" text-anchor="end" xml:space="preserve">HeII {</text>
<text transform="translate(612.3,348.6) rotate(90)" class="s" font-size="10" fill="#87ceeb" text-anchor="end" xml:space="preserve">H<tspan class="si">γ</tspan> {</text>
<text transform="translate(719.6,348.6) rotate(90)" class="s" font-size="10" fill="#ff0000" text-anchor="end" xml:space="preserve">SiIV {</text>
<text transform="translate(752.3,306.0) rotate(90)" class="s" font-size="10" fill="#ffa500" text-anchor="end" xml:space="preserve">CIII {</text>
<text transform="translate(753.3,348.6) rotate(90)" class="s" font-size="10" fill="#008000" text-anchor="end" xml:space="preserve">H<tspan class="si">γ</tspan> {</text>
<text transform="translate(877.4,348.6) rotate(90)" class="s" font-size="10" fill="#800080" text-anchor="end" xml:space="preserve">CII  {</text>
<text transform="translate(911.3,348.6) rotate(90)" class="s" font-size="10" fill="#8a2be2" text-anchor="end" xml:space="preserve">CIII {</text>
<text transform="translate(920.0,348.6) rotate(90)" class="s" font-size="10" fill="#87ceeb" text-anchor="end" xml:space="preserve">H<tspan class="si">δ</tspan> {</text>
<text transform="translate(977.5,348.6) rotate(90)" class="s" font-size="10" fill="#87ceeb" text-anchor="end" xml:space="preserve">OIII {</text>
<text transform="translate(1006.3,306.0) rotate(90)" class="s" font-size="10" fill="#87ceeb" text-anchor="end" xml:space="preserve">OIII {</text>
<text transform="translate(1010.0,348.6) rotate(90)" class="s" font-size="10" fill="#ff0000" text-anchor="end" xml:space="preserve">CIV  {</text>
<text transform="translate(1078.3,348.6) rotate(90)" class="s" font-size="10" fill="#008000" text-anchor="end" xml:space="preserve">H<tspan class="si">β</tspan> {</text>
<text transform="translate(1143.3,306.0) rotate(90)" class="s" font-size="10" fill="#ff00ff" text-anchor="end" xml:space="preserve">OII  {</text>
<text transform="translate(1139.3,348.6) rotate(90)" class="s" font-size="10" fill="#008000" text-anchor="end" xml:space="preserve">OIII {</text>
<text transform="translate(1169.3,348.6) rotate(90)" class="s" font-size="10" fill="#008000" text-anchor="end" xml:space="preserve">OIII {</text>
<text transform="translate(1183.8,348.6) rotate(90)" class="s" font-size="10" fill="#ff0000" text-anchor="end" xml:space="preserve">HeII {</text>
<rect x="101.25" y="348.25" width="1198.25" height="84.25" fill="#fff"/>
<clipPath id="cpSpec"><rect x="101.25" y="348.25" width="1198.25" height="84.25"/></clipPath>
<g clip-path="url(#cpSpec)">
<polygon points="101.0,407.2 102.2,403.0 103.4,399.9 104.6,395.6 105.7,391.0 106.9,391.3 108.1,391.7 109.3,391.8 110.4,391.4 111.6,391.9 112.8,392.0 114.0,392.2 115.1,393.0 116.3,393.6 117.5,392.7 118.7,392.5 119.9,392.4 121.0,392.2 122.2,392.4 123.4,392.2 124.6,392.7 125.7,392.9 126.9,393.2 128.1,393.1 129.3,393.7 130.4,394.4 131.6,394.4 132.8,394.4 134.0,394.0 135.1,395.6 136.3,395.6 137.5,396.4 138.7,396.8 139.8,397.5 141.0,397.7 142.2,397.5 143.4,397.5 144.6,397.6 145.7,397.7 146.9,398.1 148.1,398.0 149.3,398.0 150.4,397.2 151.6,397.8 152.8,398.0 154.0,397.5 155.1,397.6 156.3,397.4 157.5,396.7 158.7,396.4 159.8,395.5 161.0,395.4 162.2,396.3 163.4,396.6 164.5,396.8 165.7,396.9 166.9,396.5 168.1,396.3 169.3,396.2 170.4,395.6 171.6,396.5 172.8,396.3 174.0,396.4 175.1,396.8 176.3,396.4 177.5,396.5 178.7,397.0 179.8,397.0 181.0,397.3 182.2,397.2 183.4,396.7 184.5,396.5 185.7,396.6 186.9,396.4 188.1,396.9 189.2,396.9 190.4,397.4 191.6,397.8 192.8,398.3 194.0,398.7 195.1,399.3 196.3,399.3 197.5,398.8 198.7,398.9 199.8,399.0 201.0,398.5 202.2,398.8 203.4,399.4 204.5,399.3 205.7,399.1 206.9,399.5 208.1,399.9 209.2,399.7 210.4,399.7 211.6,399.9 212.8,399.9 214.0,399.3 215.1,399.8 216.3,400.3 217.5,400.4 218.7,399.5 219.8,399.3 221.0,399.3 222.2,400.6 223.4,400.3 224.5,400.1 225.7,399.4 226.9,399.8 228.1,400.8 229.2,400.4 230.4,399.8 231.6,399.7 232.8,400.7 233.9,401.0 235.1,401.0 236.3,401.6 237.5,401.0 238.7,400.8 239.8,401.4 241.0,401.2 242.2,401.2 243.4,401.2 244.5,400.9 245.7,401.7 246.9,401.8 248.1,402.5 249.2,403.2 250.4,402.9 251.6,402.6 252.8,401.9 253.9,402.4 255.1,401.6 256.3,402.0 257.5,401.5 258.6,400.9 259.8,401.5 261.0,402.0 262.2,401.9 263.4,401.7 264.5,401.7 265.7,401.9 266.9,402.1 268.1,401.7 269.2,401.5 270.4,401.9 271.6,402.2 272.8,402.3 273.9,402.1 275.1,402.3 276.3,401.7 277.5,402.0 278.6,401.7 279.8,401.4 281.0,401.2 282.2,401.7 283.3,401.8 284.5,402.2 285.7,402.3 286.9,401.9 288.1,401.6 289.2,401.6 290.4,401.6 291.6,401.7 292.8,401.4 293.9,401.3 295.1,401.9 296.3,401.9 297.5,401.9 298.6,401.6 299.8,401.4 301.0,402.1 302.2,401.6 303.3,401.2 304.5,402.4 305.7,402.4 306.9,402.0 308.1,403.1 309.2,402.9 310.4,403.2 311.6,403.3 312.8,404.2 313.9,404.6 315.1,404.4 316.3,405.0 317.5,404.5 318.6,404.5 319.8,405.1 321.0,405.0 322.2,404.6 323.3,404.8 324.5,405.3 325.7,406.1 326.9,406.0 328.0,405.9 329.2,405.8 330.4,406.0 331.6,405.8 332.8,405.5 333.9,405.3 335.1,406.7 336.3,406.3 337.5,406.2 338.6,405.6 339.8,405.8 341.0,405.9 342.2,405.1 343.3,405.2 344.5,405.7 345.7,406.1 346.9,405.6 348.0,405.8 349.2,405.9 350.4,406.0 351.6,406.2 352.7,406.2 353.9,405.2 355.1,405.2 356.3,405.7 357.5,405.3 358.6,404.9 359.8,405.4 361.0,405.9 362.2,405.4 363.3,405.7 364.5,405.4 365.7,405.3 366.9,406.2 368.0,406.1 369.2,406.1 370.4,405.8 371.6,405.7 372.7,405.9 373.9,406.0 375.1,406.2 376.3,406.1 377.4,406.1 378.6,406.3 379.8,406.3 381.0,406.0 382.2,405.8 383.3,406.3 384.5,406.4 385.7,406.8 386.9,407.2 388.0,406.9 389.2,406.7 390.4,406.4 391.6,406.6 392.7,407.1 393.9,406.8 395.1,407.0 396.3,406.8 397.4,407.1 398.6,407.2 399.8,406.8 401.0,406.2 402.2,406.6 403.3,406.8 404.5,407.3 405.7,407.2 406.9,407.2 408.0,407.1 409.2,407.3 410.4,407.6 411.6,407.9 412.7,407.7 413.9,407.4 415.1,407.5 416.3,407.3 417.4,407.5 418.6,407.5 419.8,406.9 421.0,406.7 422.1,407.4 423.3,407.8 424.5,406.3 425.7,406.4 426.9,405.4 428.0,405.1 429.2,404.6 430.4,405.6 431.6,406.7 432.7,406.8 433.9,407.0 435.1,407.3 436.3,406.5 437.4,406.4 438.6,407.2 439.8,407.0 441.0,406.6 442.1,406.6 443.3,406.8 444.5,406.6 445.7,406.6 446.8,406.9 448.0,406.7 449.2,406.4 450.4,406.5 451.6,406.6 452.7,406.6 453.9,406.7 455.1,406.5 456.3,406.7 457.4,407.1 458.6,406.7 459.8,407.4 461.0,407.0 462.1,406.6 463.3,406.6 464.5,406.5 465.7,406.1 466.8,405.9 468.0,406.0 469.2,405.7 470.4,405.9 471.5,405.6 472.7,406.0 473.9,405.9 475.1,406.2 476.3,406.5 477.4,406.5 478.6,407.6 479.8,406.9 481.0,406.9 482.1,406.4 483.3,406.6 484.5,406.8 485.7,406.6 486.8,406.2 488.0,406.3 489.2,406.7 490.4,406.8 491.5,406.9 492.7,407.0 493.9,406.6 495.1,406.9 496.3,406.2 497.4,406.6 498.6,406.5 499.8,406.5 501.0,406.4 502.1,405.6 503.3,406.2 504.5,406.1 505.7,406.2 506.8,406.8 508.0,406.7 509.2,407.1 510.4,407.0 511.5,407.2 512.7,407.5 513.9,408.3 515.1,407.8 516.2,407.7 517.4,407.7 518.6,407.6 519.8,407.5 521.0,407.7 522.1,408.4 523.3,408.2 524.5,408.5 525.7,408.2 526.8,408.2 528.0,408.1 529.2,407.8 530.4,407.2 531.5,408.0 532.7,407.6 533.9,407.7 535.1,408.4 536.2,408.2 537.4,408.7 538.6,408.3 539.8,407.4 540.9,407.6 542.1,408.1 543.3,408.7 544.5,408.6 545.7,409.4 546.8,408.7 548.0,408.8 549.2,408.7 550.4,408.4 551.5,407.9 552.7,407.7 553.9,408.1 555.1,407.8 556.2,408.3 557.4,408.0 558.6,408.1 559.8,408.5 560.9,408.3 562.1,408.0 563.3,408.1 564.5,408.5 565.6,408.2 566.8,407.6 568.0,407.4 569.2,407.2 570.4,407.1 571.5,408.1 572.7,408.7 573.9,409.3 575.1,409.0 576.2,408.9 577.4,408.3 578.6,408.9 579.8,408.2 580.9,408.6 582.1,408.2 583.3,407.9 584.5,408.2 585.6,408.3 586.8,408.3 588.0,408.7 589.2,408.8 590.4,408.6 591.5,408.5 592.7,408.2 593.9,407.4 595.1,407.3 596.2,407.7 597.4,408.3 598.6,408.4 599.8,407.7 600.9,408.3 602.1,408.4 603.3,408.0 604.5,408.0 605.6,408.2 606.8,408.1 608.0,408.1 609.2,408.4 610.3,408.9 611.5,409.0 612.7,408.8 613.9,408.6 615.1,409.0 616.2,408.9 617.4,409.2 618.6,408.3 619.8,408.0 620.9,408.1 622.1,408.4 623.3,408.0 624.5,408.3 625.6,408.3 626.8,407.7 628.0,408.2 629.2,407.4 630.3,407.4 631.5,408.3 632.7,408.7 633.9,409.0 635.0,408.7 636.2,408.8 637.4,409.1 638.6,408.9 639.8,408.9 640.9,409.6 642.1,409.4 643.3,409.2 644.5,409.0 645.6,408.5 646.8,408.0 648.0,407.9 649.2,408.2 650.3,408.3 651.5,408.3 652.7,408.4 653.9,409.1 655.0,408.5 656.2,408.7 657.4,408.8 658.6,408.6 659.7,408.5 660.9,408.5 662.1,408.4 663.3,409.2 664.5,409.6 665.6,409.2 666.8,408.5 668.0,408.6 669.2,408.6 670.3,408.4 671.5,408.7 672.7,408.8 673.9,408.7 675.0,408.4 676.2,408.1 677.4,408.4 678.6,408.4 679.7,408.8 680.9,409.0 682.1,408.7 683.3,408.2 684.5,408.4 685.6,407.9 686.8,407.7 688.0,407.2 689.2,407.3 690.3,408.0 691.5,408.7 692.7,408.7 693.9,409.1 695.0,409.1 696.2,408.5 697.4,408.9 698.6,409.2 699.7,408.3 700.9,408.0 702.1,408.6 703.3,408.9 704.4,409.1 705.6,408.9 706.8,409.1 708.0,408.7 709.2,408.3 710.3,408.4 711.5,408.3 712.7,409.1 713.9,409.2 715.0,409.4 716.2,409.6 717.4,409.6 718.6,409.7 719.7,409.1 720.9,409.2 722.1,409.3 723.3,409.5 724.4,409.8 725.6,409.6 726.8,409.7 728.0,409.6 729.1,408.9 730.3,408.9 731.5,408.4 732.7,408.4 733.9,408.2 735.0,408.7 736.2,408.8 737.4,409.5 738.6,409.9 739.7,409.2 740.9,409.0 742.1,408.9 743.3,409.1 744.4,409.7 745.6,410.1 746.8,409.5 748.0,409.4 749.1,409.2 750.3,409.4 751.5,409.7 752.7,409.6 753.8,409.4 755.0,409.9 756.2,409.3 757.4,408.7 758.6,409.4 759.7,409.9 760.9,409.2 762.1,409.4 763.3,409.3 764.4,409.6 765.6,409.4 766.8,410.0 768.0,409.7 769.1,410.0 770.3,409.5 771.5,410.0 772.7,410.8 773.8,410.7 775.0,410.5 776.2,409.9 777.4,409.9 778.6,409.9 779.7,410.2 780.9,410.0 782.1,409.9 783.3,410.0 784.4,409.5 785.6,409.2 786.8,409.1 788.0,409.3 789.1,409.6 790.3,409.8 791.5,410.0 792.7,410.1 793.8,410.0 795.0,410.0 796.2,410.4 797.4,410.2 798.5,409.7 799.7,410.0 800.9,409.7 802.1,409.6 803.3,409.3 804.4,409.5 805.6,410.2 806.8,410.2 808.0,410.1 809.1,410.5 810.3,410.5 811.5,409.6 812.7,410.1 813.8,410.2 815.0,409.4 816.2,409.9 817.4,409.9 818.5,409.9 819.7,409.8 820.9,409.9 822.1,409.8 823.2,409.8 824.4,409.8 825.6,409.7 826.8,410.2 828.0,409.8 829.1,409.9 830.3,409.8 831.5,409.7 832.7,409.7 833.8,409.7 835.0,409.5 836.2,409.8 837.4,409.9 838.5,409.6 839.7,409.7 840.9,409.4 842.1,409.2 843.2,409.8 844.4,409.8 845.6,409.8 846.8,409.9 847.9,409.8 849.1,410.1 850.3,409.9 851.5,410.0 852.7,410.4 853.8,409.9 855.0,410.3 856.2,409.9 857.4,410.1 858.5,410.4 859.7,409.6 860.9,410.0 862.1,409.5 863.2,409.9 864.4,410.3 865.6,409.5 866.8,410.2 867.9,410.0 869.1,410.0 870.3,410.0 871.5,409.7 872.7,409.9 873.8,410.4 875.0,410.6 876.2,410.6 877.4,410.5 878.5,411.4 879.7,410.6 880.9,410.9 882.1,410.5 883.2,410.7 884.4,410.1 885.6,410.2 886.8,409.6 887.9,409.7 889.1,409.8 890.3,409.2 891.5,409.7 892.6,409.6 893.8,410.0 895.0,410.1 896.2,410.2 897.4,409.8 898.5,410.2 899.7,410.0 900.9,409.8 902.1,409.9 903.2,409.9 904.4,410.8 905.6,410.7 906.8,410.5 907.9,410.2 909.1,410.4 910.3,409.7 911.5,410.1 912.6,409.8 913.8,409.9 915.0,410.4 916.2,410.7 917.3,410.6 918.5,410.1 919.7,410.1 920.9,409.9 922.1,410.5 923.2,410.2 924.4,410.0 925.6,409.7 926.8,409.4 927.9,409.6 929.1,408.9 930.3,409.0 931.5,409.6 932.6,409.8 933.8,410.0 935.0,409.1 936.2,409.4 937.3,409.3 938.5,409.2 939.7,409.7 940.9,409.7 942.0,409.6 943.2,409.4 944.4,409.7 945.6,408.9 946.8,409.7 947.9,409.3 949.1,409.4 950.3,409.7 951.5,409.8 952.6,410.0 953.8,410.2 955.0,409.4 956.2,409.3 957.3,409.1 958.5,409.1 959.7,409.1 960.9,409.0 962.0,409.4 963.2,409.3 964.4,409.3 965.6,410.0 966.8,409.5 967.9,409.5 969.1,409.1 970.3,409.0 971.5,409.3 972.6,409.4 973.8,409.9 975.0,409.6 976.2,409.7 977.3,409.9 978.5,409.9 979.7,409.3 980.9,409.2 982.0,409.5 983.2,409.5 984.4,409.4 985.6,409.7 986.7,409.5 987.9,409.5 989.1,409.3 990.3,409.2 991.5,408.8 992.6,409.4 993.8,409.6 995.0,409.0 996.2,409.8 997.3,410.1 998.5,409.4 999.7,409.4 1000.9,409.5 1002.0,410.0 1003.2,409.9 1004.4,409.6 1005.6,410.0 1006.7,409.1 1007.9,409.5 1009.1,409.2 1010.3,409.6 1011.4,409.5 1012.6,409.5 1013.8,409.3 1015.0,408.7 1016.2,409.0 1017.3,409.9 1018.5,409.6 1019.7,409.6 1020.9,409.4 1022.0,409.1 1023.2,408.4 1024.4,408.8 1025.6,409.4 1026.7,409.2 1027.9,409.0 1029.1,409.1 1030.3,409.4 1031.4,409.7 1032.6,410.2 1033.8,410.5 1035.0,409.4 1036.1,409.0 1037.3,409.3 1038.5,409.1 1039.7,409.3 1040.9,409.3 1042.0,409.5 1043.2,409.4 1044.4,409.4 1045.6,409.7 1046.7,409.2 1047.9,409.4 1049.1,409.5 1050.3,409.6 1051.4,409.6 1052.6,409.5 1053.8,409.4 1055.0,410.0 1056.1,410.0 1057.3,409.7 1058.5,409.6 1059.7,409.8 1060.9,409.6 1062.0,409.8 1063.2,409.9 1064.4,409.3 1065.6,409.3 1066.7,409.5 1067.9,409.2 1069.1,409.2 1070.3,409.7 1071.4,409.8 1072.6,409.9 1073.8,409.4 1075.0,409.4 1076.1,409.7 1077.3,410.0 1078.5,410.0 1079.7,410.3 1080.8,410.4 1082.0,409.9 1083.2,410.0 1084.4,410.3 1085.6,409.8 1086.7,410.1 1087.9,410.3 1089.1,410.1 1090.3,409.9 1091.4,409.3 1092.6,409.1 1093.8,409.3 1095.0,409.5 1096.1,409.3 1097.3,409.8 1098.5,409.7 1099.7,409.4 1100.8,409.6 1102.0,409.6 1103.2,409.2 1104.4,409.1 1105.5,408.6 1106.7,408.8 1107.9,409.5 1109.1,408.6 1110.3,409.3 1111.4,409.2 1112.6,408.5 1113.8,407.9 1115.0,408.3 1116.1,408.7 1117.3,408.8 1118.5,409.2 1119.7,409.6 1120.8,409.4 1122.0,409.3 1123.2,409.2 1124.4,409.1 1125.5,409.6 1126.7,409.6 1127.9,409.3 1129.1,409.6 1130.2,409.3 1131.4,409.7 1132.6,409.0 1133.8,409.0 1135.0,409.1 1136.1,409.4 1137.3,409.3 1138.5,409.0 1139.7,409.1 1140.8,409.7 1142.0,409.9 1143.2,410.0 1144.4,409.9 1145.5,409.7 1146.7,409.8 1147.9,410.0 1149.1,409.9 1150.2,410.0 1151.4,410.4 1152.6,410.7 1153.8,410.0 1155.0,408.8 1156.1,408.5 1157.3,409.2 1158.5,408.8 1159.7,409.6 1160.8,409.4 1162.0,408.8 1163.2,409.4 1164.4,409.7 1165.5,409.8 1166.7,409.5 1167.9,408.7 1169.1,409.0 1170.2,409.3 1171.4,408.7 1172.6,408.9 1173.8,409.2 1174.9,409.0 1176.1,409.0 1177.3,408.9 1178.5,409.1 1179.7,409.0 1180.8,408.6 1182.0,408.9 1183.2,408.8 1184.4,408.4 1185.5,408.0 1186.7,409.0 1187.9,408.3 1189.1,408.6 1190.2,408.4 1191.4,408.1 1192.6,408.5 1193.8,409.0 1194.9,409.1 1196.1,409.1 1197.3,409.3 1198.5,409.5 1199.6,409.3 1200.8,409.2 1202.0,408.7 1203.2,408.5 1204.4,409.0 1205.5,408.6 1206.7,408.7 1207.9,408.8 1209.1,408.4 1210.2,408.8 1211.4,409.2 1212.6,408.6 1213.8,408.5 1214.9,408.4 1216.1,408.6 1217.3,408.6 1218.5,408.6 1219.6,408.4 1220.8,409.1 1222.0,409.1 1223.2,409.5 1224.3,408.8 1225.5,408.1 1226.7,408.8 1227.9,408.9 1229.1,409.0 1230.2,408.5 1231.4,408.0 1232.6,408.0 1233.8,408.1 1234.9,408.4 1236.1,408.4 1237.3,408.2 1238.5,408.6 1239.6,408.8 1240.8,408.2 1242.0,408.6 1243.2,408.8 1244.3,408.6 1245.5,408.5 1246.7,408.4 1247.9,408.1 1249.1,408.1 1250.2,407.9 1251.4,408.6 1252.6,408.5 1253.8,408.3 1254.9,407.8 1256.1,407.8 1257.3,408.0 1258.5,408.4 1259.6,408.4 1260.8,408.6 1262.0,408.0 1263.2,408.3 1264.3,408.4 1265.5,408.4 1266.7,408.7 1267.9,408.4 1269.0,408.0 1270.2,408.5 1271.4,407.9 1272.6,408.1 1273.8,408.0 1274.9,408.8 1276.1,408.9 1277.3,408.5 1278.5,408.6 1279.6,408.6 1280.8,408.3 1282.0,408.5 1283.2,408.6 1284.3,408.7 1285.5,409.1 1286.7,410.1 1287.9,410.9 1289.0,411.7 1290.2,412.4 1291.4,413.6 1292.6,415.3 1293.7,416.9 1294.9,417.9 1296.1,418.1 1297.3,418.3 1298.5,418.5 1299.6,418.8 1299.6,418.8 1298.5,419.0 1297.3,419.2 1296.1,419.4 1294.9,419.6 1293.7,420.6 1292.6,422.2 1291.4,423.9 1290.2,425.1 1289.0,425.8 1287.9,426.6 1286.7,427.4 1285.5,428.4 1284.3,428.8 1283.2,428.9 1282.0,429.0 1280.8,429.2 1279.6,428.9 1278.5,428.9 1277.3,429.0 1276.1,428.6 1274.9,428.7 1273.8,429.5 1272.6,429.4 1271.4,429.6 1270.2,429.0 1269.0,429.5 1267.9,429.1 1266.7,428.8 1265.5,429.1 1264.3,429.1 1263.2,429.2 1262.0,429.5 1260.8,428.9 1259.6,429.1 1258.5,429.1 1257.3,429.5 1256.1,429.7 1254.9,429.7 1253.8,429.2 1252.6,429.0 1251.4,428.9 1250.2,429.6 1249.1,429.4 1247.9,429.4 1246.7,429.1 1245.5,429.0 1244.3,428.9 1243.2,428.7 1242.0,428.9 1240.8,429.3 1239.6,428.7 1238.5,428.9 1237.3,429.3 1236.1,429.1 1234.9,429.1 1233.8,429.4 1232.6,429.5 1231.4,429.5 1230.2,429.0 1229.1,428.5 1227.9,428.6 1226.7,428.7 1225.5,429.4 1224.3,428.7 1223.2,428.0 1222.0,428.4 1220.8,428.4 1219.6,429.1 1218.5,428.9 1217.3,428.9 1216.1,428.9 1214.9,429.1 1213.8,429.0 1212.6,428.9 1211.4,428.3 1210.2,428.7 1209.1,429.1 1207.9,428.7 1206.7,428.8 1205.5,428.9 1204.4,428.5 1203.2,429.0 1202.0,428.8 1200.8,428.3 1199.6,428.2 1198.5,428.0 1197.3,428.2 1196.1,428.4 1194.9,428.4 1193.8,428.5 1192.6,429.0 1191.4,429.4 1190.2,429.1 1189.1,428.9 1187.9,429.2 1186.7,428.5 1185.5,429.5 1184.4,429.1 1183.2,428.7 1182.0,428.6 1180.8,428.9 1179.7,428.5 1178.5,428.4 1177.3,428.6 1176.1,428.5 1174.9,428.5 1173.8,428.3 1172.6,428.6 1171.4,428.8 1170.2,428.2 1169.1,428.5 1167.9,428.8 1166.7,428.0 1165.5,427.7 1164.4,427.8 1163.2,428.1 1162.0,428.7 1160.8,428.1 1159.7,427.9 1158.5,428.7 1157.3,428.3 1156.1,429.0 1155.0,428.7 1153.8,427.5 1152.6,426.8 1151.4,427.1 1150.2,427.5 1149.1,427.6 1147.9,427.5 1146.7,427.7 1145.5,427.8 1144.4,427.6 1143.2,427.5 1142.0,427.6 1140.8,427.8 1139.7,428.4 1138.5,428.5 1137.3,428.2 1136.1,428.1 1135.0,428.4 1133.8,428.5 1132.6,428.5 1131.4,427.8 1130.2,428.2 1129.1,427.9 1127.9,428.2 1126.7,427.9 1125.5,427.9 1124.4,428.4 1123.2,428.3 1122.0,428.2 1120.8,428.1 1119.7,427.9 1118.5,428.3 1117.3,428.7 1116.1,428.8 1115.0,429.2 1113.8,429.6 1112.6,429.0 1111.4,428.3 1110.3,428.2 1109.1,428.9 1107.9,428.0 1106.7,428.7 1105.5,428.9 1104.4,428.4 1103.2,428.3 1102.0,427.9 1100.8,427.9 1099.7,428.1 1098.5,427.8 1097.3,427.7 1096.1,428.2 1095.0,428.0 1093.8,428.2 1092.6,428.4 1091.4,428.2 1090.3,427.6 1089.1,427.4 1087.9,427.2 1086.7,427.4 1085.6,427.7 1084.4,427.2 1083.2,427.5 1082.0,427.6 1080.8,427.1 1079.7,427.2 1078.5,427.5 1077.3,427.5 1076.1,427.8 1075.0,428.1 1073.8,428.1 1072.6,427.6 1071.4,427.7 1070.3,427.8 1069.1,428.3 1067.9,428.3 1066.7,428.0 1065.6,428.2 1064.4,428.2 1063.2,427.6 1062.0,427.7 1060.9,427.9 1059.7,427.7 1058.5,427.9 1057.3,427.8 1056.1,427.5 1055.0,427.5 1053.8,428.1 1052.6,428.0 1051.4,427.9 1050.3,427.9 1049.1,428.0 1047.9,428.1 1046.7,428.3 1045.6,427.8 1044.4,428.1 1043.2,428.1 1042.0,428.0 1040.9,428.2 1039.7,428.2 1038.5,428.4 1037.3,428.2 1036.1,428.5 1035.0,428.1 1033.8,427.0 1032.6,427.3 1031.4,427.8 1030.3,428.1 1029.1,428.4 1027.9,428.5 1026.7,428.3 1025.6,428.1 1024.4,428.7 1023.2,429.1 1022.0,428.4 1020.9,428.1 1019.7,427.9 1018.5,427.9 1017.3,427.6 1016.2,428.5 1015.0,428.8 1013.8,428.2 1012.6,428.0 1011.4,428.0 1010.3,427.9 1009.1,428.3 1007.9,428.0 1006.7,428.4 1005.6,427.5 1004.4,427.9 1003.2,427.6 1002.0,427.5 1000.9,428.0 999.7,428.1 998.5,428.1 997.3,427.4 996.2,427.7 995.0,428.5 993.8,427.9 992.6,428.1 991.5,428.7 990.3,428.3 989.1,428.2 987.9,428.0 986.7,428.0 985.6,427.8 984.4,428.1 983.2,428.0 982.0,428.0 980.9,428.3 979.7,428.2 978.5,427.6 977.3,427.6 976.2,427.8 975.0,427.9 973.8,427.6 972.6,428.1 971.5,428.2 970.3,428.5 969.1,428.4 967.9,428.0 966.8,428.0 965.6,427.5 964.4,428.2 963.2,428.2 962.0,428.1 960.9,428.5 959.7,428.4 958.5,428.4 957.3,428.4 956.2,428.2 955.0,428.1 953.8,427.3 952.6,427.5 951.5,427.7 950.3,427.8 949.1,428.1 947.9,428.2 946.8,427.8 945.6,428.6 944.4,427.8 943.2,428.1 942.0,427.9 940.9,427.8 939.7,427.8 938.5,428.3 937.3,428.2 936.2,428.1 935.0,428.4 933.8,427.5 932.6,427.7 931.5,427.9 930.3,428.5 929.1,428.6 927.9,427.9 926.8,428.1 925.6,427.8 924.4,427.5 923.2,427.3 922.1,427.0 920.9,427.6 919.7,427.4 918.5,427.4 917.3,426.9 916.2,426.8 915.0,427.1 913.8,427.6 912.6,427.7 911.5,427.4 910.3,427.8 909.1,427.1 907.9,427.3 906.8,427.0 905.6,426.8 904.4,426.7 903.2,427.6 902.1,427.6 900.9,427.7 899.7,427.5 898.5,427.3 897.4,427.7 896.2,427.3 895.0,427.4 893.8,427.5 892.6,427.9 891.5,427.8 890.3,428.3 889.1,427.7 887.9,427.8 886.8,427.9 885.6,427.3 884.4,427.4 883.2,426.8 882.1,427.0 880.9,426.6 879.7,426.9 878.5,426.1 877.4,427.0 876.2,426.9 875.0,426.9 873.8,427.1 872.7,427.6 871.5,427.8 870.3,427.5 869.1,427.5 867.9,427.5 866.8,427.3 865.6,428.0 864.4,427.2 863.2,427.6 862.1,428.0 860.9,427.5 859.7,427.9 858.5,427.1 857.4,427.4 856.2,427.6 855.0,427.2 853.8,427.6 852.7,427.1 851.5,427.5 850.3,427.6 849.1,427.4 847.9,427.7 846.8,427.6 845.6,427.7 844.4,427.7 843.2,427.7 842.1,428.3 840.9,428.1 839.7,427.8 838.5,427.9 837.4,427.6 836.2,427.7 835.0,428.0 833.8,427.8 832.7,427.8 831.5,427.8 830.3,427.7 829.1,427.6 828.0,427.7 826.8,427.3 825.6,427.8 824.4,427.7 823.2,427.7 822.1,427.7 820.9,427.6 819.7,427.7 818.5,427.6 817.4,427.6 816.2,427.6 815.0,428.1 813.8,427.3 812.7,427.4 811.5,427.9 810.3,427.0 809.1,427.0 808.0,427.4 806.8,427.3 805.6,427.3 804.4,428.0 803.3,428.2 802.1,427.9 800.9,427.8 799.7,427.5 798.5,427.8 797.4,427.3 796.2,427.1 795.0,427.5 793.8,427.5 792.7,427.4 791.5,427.5 790.3,427.7 789.1,427.9 788.0,428.2 786.8,428.4 785.6,428.3 784.4,428.0 783.3,427.5 782.1,427.6 780.9,427.5 779.7,427.3 778.6,427.6 777.4,427.6 776.2,427.6 775.0,427.0 773.8,426.8 772.7,426.7 771.5,427.5 770.3,428.0 769.1,427.5 768.0,427.8 766.8,427.5 765.6,428.1 764.4,427.9 763.3,428.2 762.1,428.1 760.9,428.3 759.7,427.6 758.6,428.1 757.4,428.8 756.2,428.2 755.0,427.6 753.8,428.1 752.7,427.9 751.5,427.8 750.3,428.1 749.1,428.3 748.0,428.1 746.8,428.0 745.6,427.4 744.4,427.8 743.3,428.4 742.1,428.6 740.9,428.5 739.7,428.3 738.6,427.6 737.4,428.0 736.2,428.7 735.0,428.8 733.9,429.3 732.7,429.1 731.5,429.1 730.3,428.6 729.1,428.6 728.0,427.9 726.8,427.8 725.6,427.9 724.4,427.7 723.3,428.0 722.1,428.2 720.9,428.3 719.7,428.4 718.6,427.8 717.4,427.9 716.2,427.9 715.0,428.1 713.9,428.3 712.7,428.4 711.5,429.2 710.3,429.1 709.2,429.2 708.0,428.8 706.8,428.4 705.6,428.6 704.4,428.4 703.3,428.6 702.1,428.9 700.9,429.5 699.7,429.2 698.6,428.3 697.4,428.6 696.2,429.0 695.0,428.4 693.9,428.4 692.7,428.8 691.5,428.8 690.3,429.5 689.2,430.2 688.0,430.3 686.8,429.8 685.6,429.6 684.5,429.1 683.3,429.3 682.1,428.8 680.9,428.5 679.7,428.7 678.6,429.1 677.4,429.1 676.2,429.4 675.0,429.1 673.9,428.8 672.7,428.7 671.5,428.8 670.3,429.1 669.2,428.9 668.0,428.9 666.8,429.0 665.6,428.3 664.5,427.9 663.3,428.3 662.1,429.1 660.9,429.0 659.7,429.0 658.6,428.9 657.4,428.7 656.2,428.8 655.0,429.0 653.9,428.4 652.7,429.1 651.5,429.2 650.3,429.2 649.2,429.3 648.0,429.6 646.8,429.5 645.6,429.0 644.5,428.5 643.3,428.3 642.1,428.1 640.9,427.9 639.8,428.6 638.6,428.6 637.4,428.4 636.2,428.7 635.0,428.8 633.9,428.5 632.7,428.8 631.5,429.2 630.3,430.1 629.2,430.1 628.0,429.3 626.8,429.8 625.6,429.2 624.5,429.2 623.3,429.5 622.1,429.1 620.9,429.4 619.8,429.5 618.6,429.2 617.4,428.3 616.2,428.6 615.1,428.5 613.9,428.9 612.7,428.7 611.5,428.5 610.3,428.6 609.2,429.1 608.0,429.4 606.8,429.4 605.6,429.3 604.5,429.5 603.3,429.5 602.1,429.1 600.9,429.2 599.8,429.8 598.6,429.1 597.4,429.2 596.2,429.8 595.1,430.2 593.9,430.1 592.7,429.3 591.5,429.0 590.4,428.9 589.2,428.7 588.0,428.8 586.8,429.2 585.6,429.2 584.5,429.3 583.3,429.6 582.1,429.3 580.9,428.9 579.8,429.3 578.6,428.6 577.4,429.2 576.2,428.6 575.1,428.5 573.9,428.2 572.7,428.8 571.5,429.4 570.4,430.4 569.2,430.3 568.0,430.1 566.8,429.9 565.6,429.3 564.5,429.0 563.3,429.4 562.1,429.5 560.9,429.2 559.8,429.0 558.6,429.4 557.4,429.5 556.2,429.2 555.1,429.7 553.9,429.4 552.7,429.8 551.5,429.6 550.4,429.1 549.2,428.8 548.0,428.7 546.8,428.8 545.7,428.1 544.5,428.9 543.3,428.8 542.1,429.4 540.9,429.9 539.8,430.1 538.6,429.2 537.4,428.8 536.2,429.3 535.1,429.1 533.9,429.8 532.7,429.9 531.5,429.5 530.4,430.3 529.2,429.7 528.0,429.4 526.8,429.3 525.7,429.3 524.5,429.0 523.3,429.3 522.1,429.1 521.0,429.8 519.8,430.0 518.6,429.9 517.4,429.8 516.2,429.8 515.1,429.7 513.9,429.2 512.7,430.0 511.5,430.3 510.4,430.5 509.2,430.4 508.0,430.8 506.8,430.7 505.7,431.3 504.5,431.4 503.3,431.3 502.1,431.9 501.0,431.1 499.8,431.0 498.6,431.0 497.4,430.9 496.3,431.3 495.1,430.6 493.9,430.9 492.7,430.5 491.5,430.6 490.4,430.7 489.2,430.8 488.0,431.2 486.8,431.3 485.7,430.9 484.5,430.7 483.3,430.9 482.1,431.1 481.0,430.6 479.8,430.6 478.6,429.9 477.4,431.0 476.3,431.0 475.1,431.3 473.9,431.6 472.7,431.5 471.5,431.9 470.4,431.6 469.2,431.8 468.0,431.5 466.8,431.6 465.7,431.4 464.5,431.0 463.3,430.9 462.1,430.9 461.0,430.5 459.8,430.1 458.6,430.8 457.4,430.4 456.3,430.8 455.1,431.0 453.9,430.8 452.7,430.9 451.6,430.9 450.4,431.0 449.2,431.1 448.0,430.8 446.8,430.6 445.7,430.9 444.5,430.9 443.3,430.7 442.1,430.9 441.0,430.9 439.8,430.5 438.6,430.3 437.4,431.1 436.3,431.0 435.1,430.2 433.9,430.5 432.7,430.7 431.6,430.8 430.4,431.9 429.2,432.9 428.0,432.4 426.9,432.1 425.7,431.1 424.5,431.2 423.3,429.7 422.1,430.1 421.0,430.8 419.8,430.6 418.6,430.0 417.4,430.0 416.3,430.2 415.1,430.0 413.9,430.1 412.7,429.8 411.6,429.6 410.4,429.9 409.2,430.2 408.0,430.4 406.9,430.3 405.7,430.3 404.5,430.2 403.3,430.7 402.2,430.9 401.0,431.3 399.8,430.7 398.6,430.3 397.4,430.4 396.3,430.7 395.1,430.5 393.9,430.7 392.7,430.4 391.6,430.9 390.4,431.1 389.2,430.8 388.0,430.6 386.9,430.3 385.7,430.7 384.5,431.1 383.3,431.2 382.2,431.7 381.0,431.5 379.8,431.2 378.6,431.2 377.4,431.4 376.3,431.4 375.1,431.3 373.9,431.5 372.7,431.6 371.6,431.8 370.4,431.7 369.2,431.4 368.0,431.4 366.9,431.3 365.7,432.2 364.5,432.1 363.3,431.8 362.2,432.1 361.0,431.6 359.8,432.1 358.6,432.6 357.5,432.2 356.3,431.8 355.1,432.3 353.9,432.3 352.7,431.3 351.6,431.3 350.4,431.5 349.2,431.6 348.0,431.7 346.9,431.9 345.7,431.4 344.5,431.8 343.3,432.3 342.2,432.4 341.0,431.6 339.8,431.7 338.6,431.9 337.5,431.3 336.3,431.2 335.1,430.8 333.9,432.2 332.8,432.0 331.6,431.7 330.4,431.5 329.2,431.7 328.0,431.6 326.9,431.5 325.7,431.4 324.5,432.2 323.3,432.7 322.2,432.9 321.0,432.5 319.8,432.4 318.6,433.0 317.5,433.0 316.3,432.5 315.1,433.1 313.9,432.9 312.8,433.3 311.6,434.2 310.4,434.3 309.2,434.6 308.1,434.4 306.9,435.5 305.7,435.1 304.5,435.1 303.3,436.3 302.2,435.9 301.0,435.4 299.8,436.1 298.6,435.9 297.5,435.6 296.3,435.6 295.1,435.6 293.9,436.2 292.8,436.1 291.6,435.8 290.4,435.9 289.2,435.9 288.1,435.9 286.9,435.6 285.7,435.2 284.5,435.3 283.3,435.7 282.2,435.8 281.0,436.3 279.8,436.1 278.6,435.8 277.5,435.5 276.3,435.8 275.1,435.2 273.9,435.4 272.8,435.2 271.6,435.3 270.4,435.6 269.2,436.0 268.1,435.8 266.9,435.4 265.7,435.6 264.5,435.8 263.4,435.8 262.2,435.6 261.0,435.5 259.8,436.0 258.6,436.6 257.5,436.0 256.3,435.5 255.1,435.9 253.9,435.1 252.8,435.6 251.6,434.9 250.4,434.6 249.2,434.3 248.1,435.0 246.9,435.7 245.7,435.8 244.5,436.6 243.4,436.3 242.2,436.3 241.0,436.3 239.8,436.1 238.7,436.7 237.5,436.5 236.3,435.9 235.1,436.5 233.9,436.5 232.8,436.8 231.6,437.8 230.4,437.7 229.2,437.1 228.1,436.7 226.9,437.7 225.7,438.1 224.5,437.4 223.4,437.2 222.2,436.9 221.0,438.2 219.8,438.2 218.7,438.0 217.5,437.1 216.3,437.2 215.1,437.7 214.0,438.2 212.8,437.6 211.6,437.6 210.4,437.8 209.2,437.8 208.1,437.6 206.9,438.0 205.7,438.4 204.5,438.2 203.4,438.1 202.2,438.7 201.0,439.0 199.8,438.5 198.7,438.6 197.5,438.7 196.3,438.2 195.1,438.2 194.0,438.8 192.8,439.2 191.6,439.7 190.4,440.1 189.2,440.6 188.1,440.6 186.9,441.1 185.7,440.9 184.5,441.0 183.4,440.8 182.2,440.3 181.0,440.2 179.8,440.5 178.7,440.5 177.5,441.0 176.3,441.1 175.1,440.7 174.0,441.1 172.8,441.2 171.6,441.0 170.4,441.9 169.3,441.3 168.1,441.2 166.9,441.0 165.7,440.6 164.5,440.7 163.4,440.9 162.2,441.2 161.0,442.1 159.8,442.0 158.7,441.1 157.5,440.8 156.3,440.1 155.1,439.9 154.0,440.0 152.8,439.5 151.6,439.7 150.4,440.3 149.3,439.5 148.1,439.5 146.9,439.4 145.7,439.8 144.6,439.9 143.4,440.0 142.2,440.0 141.0,439.8 139.8,440.0 138.7,440.7 137.5,441.1 136.3,441.9 135.1,441.9 134.0,443.5 132.8,443.1 131.6,443.1 130.4,443.1 129.3,443.8 128.1,444.4 126.9,444.3 125.7,444.6 124.6,444.8 123.4,445.3 122.2,445.1 121.0,445.3 119.9,445.1 118.7,445.0 117.5,444.8 116.3,443.9 115.1,444.5 114.0,445.3 112.8,445.5 111.6,445.6 110.4,446.1 109.3,445.7 108.1,445.8 106.9,446.2 105.7,446.5 104.6,441.9 103.4,437.6 102.2,434.5 101.0,430.3" fill="#bfbfbf"/>
<rect x="347.0" y="348.25" width="54.89999999999998" height="84.25" fill="#c6be0a"/>
<clipPath id="cpYel"><rect x="347.0" y="348.25" width="54.89999999999998" height="84.25"/></clipPath>
<polygon clip-path="url(#cpYel)" points="101.0,407.2 102.2,403.0 103.4,399.9 104.6,395.6 105.7,391.0 106.9,391.3 108.1,391.7 109.3,391.8 110.4,391.4 111.6,391.9 112.8,392.0 114.0,392.2 115.1,393.0 116.3,393.6 117.5,392.7 118.7,392.5 119.9,392.4 121.0,392.2 122.2,392.4 123.4,392.2 124.6,392.7 125.7,392.9 126.9,393.2 128.1,393.1 129.3,393.7 130.4,394.4 131.6,394.4 132.8,394.4 134.0,394.0 135.1,395.6 136.3,395.6 137.5,396.4 138.7,396.8 139.8,397.5 141.0,397.7 142.2,397.5 143.4,397.5 144.6,397.6 145.7,397.7 146.9,398.1 148.1,398.0 149.3,398.0 150.4,397.2 151.6,397.8 152.8,398.0 154.0,397.5 155.1,397.6 156.3,397.4 157.5,396.7 158.7,396.4 159.8,395.5 161.0,395.4 162.2,396.3 163.4,396.6 164.5,396.8 165.7,396.9 166.9,396.5 168.1,396.3 169.3,396.2 170.4,395.6 171.6,396.5 172.8,396.3 174.0,396.4 175.1,396.8 176.3,396.4 177.5,396.5 178.7,397.0 179.8,397.0 181.0,397.3 182.2,397.2 183.4,396.7 184.5,396.5 185.7,396.6 186.9,396.4 188.1,396.9 189.2,396.9 190.4,397.4 191.6,397.8 192.8,398.3 194.0,398.7 195.1,399.3 196.3,399.3 197.5,398.8 198.7,398.9 199.8,399.0 201.0,398.5 202.2,398.8 203.4,399.4 204.5,399.3 205.7,399.1 206.9,399.5 208.1,399.9 209.2,399.7 210.4,399.7 211.6,399.9 212.8,399.9 214.0,399.3 215.1,399.8 216.3,400.3 217.5,400.4 218.7,399.5 219.8,399.3 221.0,399.3 222.2,400.6 223.4,400.3 224.5,400.1 225.7,399.4 226.9,399.8 228.1,400.8 229.2,400.4 230.4,399.8 231.6,399.7 232.8,400.7 233.9,401.0 235.1,401.0 236.3,401.6 237.5,401.0 238.7,400.8 239.8,401.4 241.0,401.2 242.2,401.2 243.4,401.2 244.5,400.9 245.7,401.7 246.9,401.8 248.1,402.5 249.2,403.2 250.4,402.9 251.6,402.6 252.8,401.9 253.9,402.4 255.1,401.6 256.3,402.0 257.5,401.5 258.6,400.9 259.8,401.5 261.0,402.0 262.2,401.9 263.4,401.7 264.5,401.7 265.7,401.9 266.9,402.1 268.1,401.7 269.2,401.5 270.4,401.9 271.6,402.2 272.8,402.3 273.9,402.1 275.1,402.3 276.3,401.7 277.5,402.0 278.6,401.7 279.8,401.4 281.0,401.2 282.2,401.7 283.3,401.8 284.5,402.2 285.7,402.3 286.9,401.9 288.1,401.6 289.2,401.6 290.4,401.6 291.6,401.7 292.8,401.4 293.9,401.3 295.1,401.9 296.3,401.9 297.5,401.9 298.6,401.6 299.8,401.4 301.0,402.1 302.2,401.6 303.3,401.2 304.5,402.4 305.7,402.4 306.9,402.0 308.1,403.1 309.2,402.9 310.4,403.2 311.6,403.3 312.8,404.2 313.9,404.6 315.1,404.4 316.3,405.0 317.5,404.5 318.6,404.5 319.8,405.1 321.0,405.0 322.2,404.6 323.3,404.8 324.5,405.3 325.7,406.1 326.9,406.0 328.0,405.9 329.2,405.8 330.4,406.0 331.6,405.8 332.8,405.5 333.9,405.3 335.1,406.7 336.3,406.3 337.5,406.2 338.6,405.6 339.8,405.8 341.0,405.9 342.2,405.1 343.3,405.2 344.5,405.7 345.7,406.1 346.9,405.6 348.0,405.8 349.2,405.9 350.4,406.0 351.6,406.2 352.7,406.2 353.9,405.2 355.1,405.2 356.3,405.7 357.5,405.3 358.6,404.9 359.8,405.4 361.0,405.9 362.2,405.4 363.3,405.7 364.5,405.4 365.7,405.3 366.9,406.2 368.0,406.1 369.2,406.1 370.4,405.8 371.6,405.7 372.7,405.9 373.9,406.0 375.1,406.2 376.3,406.1 377.4,406.1 378.6,406.3 379.8,406.3 381.0,406.0 382.2,405.8 383.3,406.3 384.5,406.4 385.7,406.8 386.9,407.2 388.0,406.9 389.2,406.7 390.4,406.4 391.6,406.6 392.7,407.1 393.9,406.8 395.1,407.0 396.3,406.8 397.4,407.1 398.6,407.2 399.8,406.8 401.0,406.2 402.2,406.6 403.3,406.8 404.5,407.3 405.7,407.2 406.9,407.2 408.0,407.1 409.2,407.3 410.4,407.6 411.6,407.9 412.7,407.7 413.9,407.4 415.1,407.5 416.3,407.3 417.4,407.5 418.6,407.5 419.8,406.9 421.0,406.7 422.1,407.4 423.3,407.8 424.5,406.3 425.7,406.4 426.9,405.4 428.0,405.1 429.2,404.6 430.4,405.6 431.6,406.7 432.7,406.8 433.9,407.0 435.1,407.3 436.3,406.5 437.4,406.4 438.6,407.2 439.8,407.0 441.0,406.6 442.1,406.6 443.3,406.8 444.5,406.6 445.7,406.6 446.8,406.9 448.0,406.7 449.2,406.4 450.4,406.5 451.6,406.6 452.7,406.6 453.9,406.7 455.1,406.5 456.3,406.7 457.4,407.1 458.6,406.7 459.8,407.4 461.0,407.0 462.1,406.6 463.3,406.6 464.5,406.5 465.7,406.1 466.8,405.9 468.0,406.0 469.2,405.7 470.4,405.9 471.5,405.6 472.7,406.0 473.9,405.9 475.1,406.2 476.3,406.5 477.4,406.5 478.6,407.6 479.8,406.9 481.0,406.9 482.1,406.4 483.3,406.6 484.5,406.8 485.7,406.6 486.8,406.2 488.0,406.3 489.2,406.7 490.4,406.8 491.5,406.9 492.7,407.0 493.9,406.6 495.1,406.9 496.3,406.2 497.4,406.6 498.6,406.5 499.8,406.5 501.0,406.4 502.1,405.6 503.3,406.2 504.5,406.1 505.7,406.2 506.8,406.8 508.0,406.7 509.2,407.1 510.4,407.0 511.5,407.2 512.7,407.5 513.9,408.3 515.1,407.8 516.2,407.7 517.4,407.7 518.6,407.6 519.8,407.5 521.0,407.7 522.1,408.4 523.3,408.2 524.5,408.5 525.7,408.2 526.8,408.2 528.0,408.1 529.2,407.8 530.4,407.2 531.5,408.0 532.7,407.6 533.9,407.7 535.1,408.4 536.2,408.2 537.4,408.7 538.6,408.3 539.8,407.4 540.9,407.6 542.1,408.1 543.3,408.7 544.5,408.6 545.7,409.4 546.8,408.7 548.0,408.8 549.2,408.7 550.4,408.4 551.5,407.9 552.7,407.7 553.9,408.1 555.1,407.8 556.2,408.3 557.4,408.0 558.6,408.1 559.8,408.5 560.9,408.3 562.1,408.0 563.3,408.1 564.5,408.5 565.6,408.2 566.8,407.6 568.0,407.4 569.2,407.2 570.4,407.1 571.5,408.1 572.7,408.7 573.9,409.3 575.1,409.0 576.2,408.9 577.4,408.3 578.6,408.9 579.8,408.2 580.9,408.6 582.1,408.2 583.3,407.9 584.5,408.2 585.6,408.3 586.8,408.3 588.0,408.7 589.2,408.8 590.4,408.6 591.5,408.5 592.7,408.2 593.9,407.4 595.1,407.3 596.2,407.7 597.4,408.3 598.6,408.4 599.8,407.7 600.9,408.3 602.1,408.4 603.3,408.0 604.5,408.0 605.6,408.2 606.8,408.1 608.0,408.1 609.2,408.4 610.3,408.9 611.5,409.0 612.7,408.8 613.9,408.6 615.1,409.0 616.2,408.9 617.4,409.2 618.6,408.3 619.8,408.0 620.9,408.1 622.1,408.4 623.3,408.0 624.5,408.3 625.6,408.3 626.8,407.7 628.0,408.2 629.2,407.4 630.3,407.4 631.5,408.3 632.7,408.7 633.9,409.0 635.0,408.7 636.2,408.8 637.4,409.1 638.6,408.9 639.8,408.9 640.9,409.6 642.1,409.4 643.3,409.2 644.5,409.0 645.6,408.5 646.8,408.0 648.0,407.9 649.2,408.2 650.3,408.3 651.5,408.3 652.7,408.4 653.9,409.1 655.0,408.5 656.2,408.7 657.4,408.8 658.6,408.6 659.7,408.5 660.9,408.5 662.1,408.4 663.3,409.2 664.5,409.6 665.6,409.2 666.8,408.5 668.0,408.6 669.2,408.6 670.3,408.4 671.5,408.7 672.7,408.8 673.9,408.7 675.0,408.4 676.2,408.1 677.4,408.4 678.6,408.4 679.7,408.8 680.9,409.0 682.1,408.7 683.3,408.2 684.5,408.4 685.6,407.9 686.8,407.7 688.0,407.2 689.2,407.3 690.3,408.0 691.5,408.7 692.7,408.7 693.9,409.1 695.0,409.1 696.2,408.5 697.4,408.9 698.6,409.2 699.7,408.3 700.9,408.0 702.1,408.6 703.3,408.9 704.4,409.1 705.6,408.9 706.8,409.1 708.0,408.7 709.2,408.3 710.3,408.4 711.5,408.3 712.7,409.1 713.9,409.2 715.0,409.4 716.2,409.6 717.4,409.6 718.6,409.7 719.7,409.1 720.9,409.2 722.1,409.3 723.3,409.5 724.4,409.8 725.6,409.6 726.8,409.7 728.0,409.6 729.1,408.9 730.3,408.9 731.5,408.4 732.7,408.4 733.9,408.2 735.0,408.7 736.2,408.8 737.4,409.5 738.6,409.9 739.7,409.2 740.9,409.0 742.1,408.9 743.3,409.1 744.4,409.7 745.6,410.1 746.8,409.5 748.0,409.4 749.1,409.2 750.3,409.4 751.5,409.7 752.7,409.6 753.8,409.4 755.0,409.9 756.2,409.3 757.4,408.7 758.6,409.4 759.7,409.9 760.9,409.2 762.1,409.4 763.3,409.3 764.4,409.6 765.6,409.4 766.8,410.0 768.0,409.7 769.1,410.0 770.3,409.5 771.5,410.0 772.7,410.8 773.8,410.7 775.0,410.5 776.2,409.9 777.4,409.9 778.6,409.9 779.7,410.2 780.9,410.0 782.1,409.9 783.3,410.0 784.4,409.5 785.6,409.2 786.8,409.1 788.0,409.3 789.1,409.6 790.3,409.8 791.5,410.0 792.7,410.1 793.8,410.0 795.0,410.0 796.2,410.4 797.4,410.2 798.5,409.7 799.7,410.0 800.9,409.7 802.1,409.6 803.3,409.3 804.4,409.5 805.6,410.2 806.8,410.2 808.0,410.1 809.1,410.5 810.3,410.5 811.5,409.6 812.7,410.1 813.8,410.2 815.0,409.4 816.2,409.9 817.4,409.9 818.5,409.9 819.7,409.8 820.9,409.9 822.1,409.8 823.2,409.8 824.4,409.8 825.6,409.7 826.8,410.2 828.0,409.8 829.1,409.9 830.3,409.8 831.5,409.7 832.7,409.7 833.8,409.7 835.0,409.5 836.2,409.8 837.4,409.9 838.5,409.6 839.7,409.7 840.9,409.4 842.1,409.2 843.2,409.8 844.4,409.8 845.6,409.8 846.8,409.9 847.9,409.8 849.1,410.1 850.3,409.9 851.5,410.0 852.7,410.4 853.8,409.9 855.0,410.3 856.2,409.9 857.4,410.1 858.5,410.4 859.7,409.6 860.9,410.0 862.1,409.5 863.2,409.9 864.4,410.3 865.6,409.5 866.8,410.2 867.9,410.0 869.1,410.0 870.3,410.0 871.5,409.7 872.7,409.9 873.8,410.4 875.0,410.6 876.2,410.6 877.4,410.5 878.5,411.4 879.7,410.6 880.9,410.9 882.1,410.5 883.2,410.7 884.4,410.1 885.6,410.2 886.8,409.6 887.9,409.7 889.1,409.8 890.3,409.2 891.5,409.7 892.6,409.6 893.8,410.0 895.0,410.1 896.2,410.2 897.4,409.8 898.5,410.2 899.7,410.0 900.9,409.8 902.1,409.9 903.2,409.9 904.4,410.8 905.6,410.7 906.8,410.5 907.9,410.2 909.1,410.4 910.3,409.7 911.5,410.1 912.6,409.8 913.8,409.9 915.0,410.4 916.2,410.7 917.3,410.6 918.5,410.1 919.7,410.1 920.9,409.9 922.1,410.5 923.2,410.2 924.4,410.0 925.6,409.7 926.8,409.4 927.9,409.6 929.1,408.9 930.3,409.0 931.5,409.6 932.6,409.8 933.8,410.0 935.0,409.1 936.2,409.4 937.3,409.3 938.5,409.2 939.7,409.7 940.9,409.7 942.0,409.6 943.2,409.4 944.4,409.7 945.6,408.9 946.8,409.7 947.9,409.3 949.1,409.4 950.3,409.7 951.5,409.8 952.6,410.0 953.8,410.2 955.0,409.4 956.2,409.3 957.3,409.1 958.5,409.1 959.7,409.1 960.9,409.0 962.0,409.4 963.2,409.3 964.4,409.3 965.6,410.0 966.8,409.5 967.9,409.5 969.1,409.1 970.3,409.0 971.5,409.3 972.6,409.4 973.8,409.9 975.0,409.6 976.2,409.7 977.3,409.9 978.5,409.9 979.7,409.3 980.9,409.2 982.0,409.5 983.2,409.5 984.4,409.4 985.6,409.7 986.7,409.5 987.9,409.5 989.1,409.3 990.3,409.2 991.5,408.8 992.6,409.4 993.8,409.6 995.0,409.0 996.2,409.8 997.3,410.1 998.5,409.4 999.7,409.4 1000.9,409.5 1002.0,410.0 1003.2,409.9 1004.4,409.6 1005.6,410.0 1006.7,409.1 1007.9,409.5 1009.1,409.2 1010.3,409.6 1011.4,409.5 1012.6,409.5 1013.8,409.3 1015.0,408.7 1016.2,409.0 1017.3,409.9 1018.5,409.6 1019.7,409.6 1020.9,409.4 1022.0,409.1 1023.2,408.4 1024.4,408.8 1025.6,409.4 1026.7,409.2 1027.9,409.0 1029.1,409.1 1030.3,409.4 1031.4,409.7 1032.6,410.2 1033.8,410.5 1035.0,409.4 1036.1,409.0 1037.3,409.3 1038.5,409.1 1039.7,409.3 1040.9,409.3 1042.0,409.5 1043.2,409.4 1044.4,409.4 1045.6,409.7 1046.7,409.2 1047.9,409.4 1049.1,409.5 1050.3,409.6 1051.4,409.6 1052.6,409.5 1053.8,409.4 1055.0,410.0 1056.1,410.0 1057.3,409.7 1058.5,409.6 1059.7,409.8 1060.9,409.6 1062.0,409.8 1063.2,409.9 1064.4,409.3 1065.6,409.3 1066.7,409.5 1067.9,409.2 1069.1,409.2 1070.3,409.7 1071.4,409.8 1072.6,409.9 1073.8,409.4 1075.0,409.4 1076.1,409.7 1077.3,410.0 1078.5,410.0 1079.7,410.3 1080.8,410.4 1082.0,409.9 1083.2,410.0 1084.4,410.3 1085.6,409.8 1086.7,410.1 1087.9,410.3 1089.1,410.1 1090.3,409.9 1091.4,409.3 1092.6,409.1 1093.8,409.3 1095.0,409.5 1096.1,409.3 1097.3,409.8 1098.5,409.7 1099.7,409.4 1100.8,409.6 1102.0,409.6 1103.2,409.2 1104.4,409.1 1105.5,408.6 1106.7,408.8 1107.9,409.5 1109.1,408.6 1110.3,409.3 1111.4,409.2 1112.6,408.5 1113.8,407.9 1115.0,408.3 1116.1,408.7 1117.3,408.8 1118.5,409.2 1119.7,409.6 1120.8,409.4 1122.0,409.3 1123.2,409.2 1124.4,409.1 1125.5,409.6 1126.7,409.6 1127.9,409.3 1129.1,409.6 1130.2,409.3 1131.4,409.7 1132.6,409.0 1133.8,409.0 1135.0,409.1 1136.1,409.4 1137.3,409.3 1138.5,409.0 1139.7,409.1 1140.8,409.7 1142.0,409.9 1143.2,410.0 1144.4,409.9 1145.5,409.7 1146.7,409.8 1147.9,410.0 1149.1,409.9 1150.2,410.0 1151.4,410.4 1152.6,410.7 1153.8,410.0 1155.0,408.8 1156.1,408.5 1157.3,409.2 1158.5,408.8 1159.7,409.6 1160.8,409.4 1162.0,408.8 1163.2,409.4 1164.4,409.7 1165.5,409.8 1166.7,409.5 1167.9,408.7 1169.1,409.0 1170.2,409.3 1171.4,408.7 1172.6,408.9 1173.8,409.2 1174.9,409.0 1176.1,409.0 1177.3,408.9 1178.5,409.1 1179.7,409.0 1180.8,408.6 1182.0,408.9 1183.2,408.8 1184.4,408.4 1185.5,408.0 1186.7,409.0 1187.9,408.3 1189.1,408.6 1190.2,408.4 1191.4,408.1 1192.6,408.5 1193.8,409.0 1194.9,409.1 1196.1,409.1 1197.3,409.3 1198.5,409.5 1199.6,409.3 1200.8,409.2 1202.0,408.7 1203.2,408.5 1204.4,409.0 1205.5,408.6 1206.7,408.7 1207.9,408.8 1209.1,408.4 1210.2,408.8 1211.4,409.2 1212.6,408.6 1213.8,408.5 1214.9,408.4 1216.1,408.6 1217.3,408.6 1218.5,408.6 1219.6,408.4 1220.8,409.1 1222.0,409.1 1223.2,409.5 1224.3,408.8 1225.5,408.1 1226.7,408.8 1227.9,408.9 1229.1,409.0 1230.2,408.5 1231.4,408.0 1232.6,408.0 1233.8,408.1 1234.9,408.4 1236.1,408.4 1237.3,408.2 1238.5,408.6 1239.6,408.8 1240.8,408.2 1242.0,408.6 1243.2,408.8 1244.3,408.6 1245.5,408.5 1246.7,408.4 1247.9,408.1 1249.1,408.1 1250.2,407.9 1251.4,408.6 1252.6,408.5 1253.8,408.3 1254.9,407.8 1256.1,407.8 1257.3,408.0 1258.5,408.4 1259.6,408.4 1260.8,408.6 1262.0,408.0 1263.2,408.3 1264.3,408.4 1265.5,408.4 1266.7,408.7 1267.9,408.4 1269.0,408.0 1270.2,408.5 1271.4,407.9 1272.6,408.1 1273.8,408.0 1274.9,408.8 1276.1,408.9 1277.3,408.5 1278.5,408.6 1279.6,408.6 1280.8,408.3 1282.0,408.5 1283.2,408.6 1284.3,408.7 1285.5,409.1 1286.7,410.1 1287.9,410.9 1289.0,411.7 1290.2,412.4 1291.4,413.6 1292.6,415.3 1293.7,416.9 1294.9,417.9 1296.1,418.1 1297.3,418.3 1298.5,418.5 1299.6,418.8 1299.6,418.8 1298.5,419.0 1297.3,419.2 1296.1,419.4 1294.9,419.6 1293.7,420.6 1292.6,422.2 1291.4,423.9 1290.2,425.1 1289.0,425.8 1287.9,426.6 1286.7,427.4 1285.5,428.4 1284.3,428.8 1283.2,428.9 1282.0,429.0 1280.8,429.2 1279.6,428.9 1278.5,428.9 1277.3,429.0 1276.1,428.6 1274.9,428.7 1273.8,429.5 1272.6,429.4 1271.4,429.6 1270.2,429.0 1269.0,429.5 1267.9,429.1 1266.7,428.8 1265.5,429.1 1264.3,429.1 1263.2,429.2 1262.0,429.5 1260.8,428.9 1259.6,429.1 1258.5,429.1 1257.3,429.5 1256.1,429.7 1254.9,429.7 1253.8,429.2 1252.6,429.0 1251.4,428.9 1250.2,429.6 1249.1,429.4 1247.9,429.4 1246.7,429.1 1245.5,429.0 1244.3,428.9 1243.2,428.7 1242.0,428.9 1240.8,429.3 1239.6,428.7 1238.5,428.9 1237.3,429.3 1236.1,429.1 1234.9,429.1 1233.8,429.4 1232.6,429.5 1231.4,429.5 1230.2,429.0 1229.1,428.5 1227.9,428.6 1226.7,428.7 1225.5,429.4 1224.3,428.7 1223.2,428.0 1222.0,428.4 1220.8,428.4 1219.6,429.1 1218.5,428.9 1217.3,428.9 1216.1,428.9 1214.9,429.1 1213.8,429.0 1212.6,428.9 1211.4,428.3 1210.2,428.7 1209.1,429.1 1207.9,428.7 1206.7,428.8 1205.5,428.9 1204.4,428.5 1203.2,429.0 1202.0,428.8 1200.8,428.3 1199.6,428.2 1198.5,428.0 1197.3,428.2 1196.1,428.4 1194.9,428.4 1193.8,428.5 1192.6,429.0 1191.4,429.4 1190.2,429.1 1189.1,428.9 1187.9,429.2 1186.7,428.5 1185.5,429.5 1184.4,429.1 1183.2,428.7 1182.0,428.6 1180.8,428.9 1179.7,428.5 1178.5,428.4 1177.3,428.6 1176.1,428.5 1174.9,428.5 1173.8,428.3 1172.6,428.6 1171.4,428.8 1170.2,428.2 1169.1,428.5 1167.9,428.8 1166.7,428.0 1165.5,427.7 1164.4,427.8 1163.2,428.1 1162.0,428.7 1160.8,428.1 1159.7,427.9 1158.5,428.7 1157.3,428.3 1156.1,429.0 1155.0,428.7 1153.8,427.5 1152.6,426.8 1151.4,427.1 1150.2,427.5 1149.1,427.6 1147.9,427.5 1146.7,427.7 1145.5,427.8 1144.4,427.6 1143.2,427.5 1142.0,427.6 1140.8,427.8 1139.7,428.4 1138.5,428.5 1137.3,428.2 1136.1,428.1 1135.0,428.4 1133.8,428.5 1132.6,428.5 1131.4,427.8 1130.2,428.2 1129.1,427.9 1127.9,428.2 1126.7,427.9 1125.5,427.9 1124.4,428.4 1123.2,428.3 1122.0,428.2 1120.8,428.1 1119.7,427.9 1118.5,428.3 1117.3,428.7 1116.1,428.8 1115.0,429.2 1113.8,429.6 1112.6,429.0 1111.4,428.3 1110.3,428.2 1109.1,428.9 1107.9,428.0 1106.7,428.7 1105.5,428.9 1104.4,428.4 1103.2,428.3 1102.0,427.9 1100.8,427.9 1099.7,428.1 1098.5,427.8 1097.3,427.7 1096.1,428.2 1095.0,428.0 1093.8,428.2 1092.6,428.4 1091.4,428.2 1090.3,427.6 1089.1,427.4 1087.9,427.2 1086.7,427.4 1085.6,427.7 1084.4,427.2 1083.2,427.5 1082.0,427.6 1080.8,427.1 1079.7,427.2 1078.5,427.5 1077.3,427.5 1076.1,427.8 1075.0,428.1 1073.8,428.1 1072.6,427.6 1071.4,427.7 1070.3,427.8 1069.1,428.3 1067.9,428.3 1066.7,428.0 1065.6,428.2 1064.4,428.2 1063.2,427.6 1062.0,427.7 1060.9,427.9 1059.7,427.7 1058.5,427.9 1057.3,427.8 1056.1,427.5 1055.0,427.5 1053.8,428.1 1052.6,428.0 1051.4,427.9 1050.3,427.9 1049.1,428.0 1047.9,428.1 1046.7,428.3 1045.6,427.8 1044.4,428.1 1043.2,428.1 1042.0,428.0 1040.9,428.2 1039.7,428.2 1038.5,428.4 1037.3,428.2 1036.1,428.5 1035.0,428.1 1033.8,427.0 1032.6,427.3 1031.4,427.8 1030.3,428.1 1029.1,428.4 1027.9,428.5 1026.7,428.3 1025.6,428.1 1024.4,428.7 1023.2,429.1 1022.0,428.4 1020.9,428.1 1019.7,427.9 1018.5,427.9 1017.3,427.6 1016.2,428.5 1015.0,428.8 1013.8,428.2 1012.6,428.0 1011.4,428.0 1010.3,427.9 1009.1,428.3 1007.9,428.0 1006.7,428.4 1005.6,427.5 1004.4,427.9 1003.2,427.6 1002.0,427.5 1000.9,428.0 999.7,428.1 998.5,428.1 997.3,427.4 996.2,427.7 995.0,428.5 993.8,427.9 992.6,428.1 991.5,428.7 990.3,428.3 989.1,428.2 987.9,428.0 986.7,428.0 985.6,427.8 984.4,428.1 983.2,428.0 982.0,428.0 980.9,428.3 979.7,428.2 978.5,427.6 977.3,427.6 976.2,427.8 975.0,427.9 973.8,427.6 972.6,428.1 971.5,428.2 970.3,428.5 969.1,428.4 967.9,428.0 966.8,428.0 965.6,427.5 964.4,428.2 963.2,428.2 962.0,428.1 960.9,428.5 959.7,428.4 958.5,428.4 957.3,428.4 956.2,428.2 955.0,428.1 953.8,427.3 952.6,427.5 951.5,427.7 950.3,427.8 949.1,428.1 947.9,428.2 946.8,427.8 945.6,428.6 944.4,427.8 943.2,428.1 942.0,427.9 940.9,427.8 939.7,427.8 938.5,428.3 937.3,428.2 936.2,428.1 935.0,428.4 933.8,427.5 932.6,427.7 931.5,427.9 930.3,428.5 929.1,428.6 927.9,427.9 926.8,428.1 925.6,427.8 924.4,427.5 923.2,427.3 922.1,427.0 920.9,427.6 919.7,427.4 918.5,427.4 917.3,426.9 916.2,426.8 915.0,427.1 913.8,427.6 912.6,427.7 911.5,427.4 910.3,427.8 909.1,427.1 907.9,427.3 906.8,427.0 905.6,426.8 904.4,426.7 903.2,427.6 902.1,427.6 900.9,427.7 899.7,427.5 898.5,427.3 897.4,427.7 896.2,427.3 895.0,427.4 893.8,427.5 892.6,427.9 891.5,427.8 890.3,428.3 889.1,427.7 887.9,427.8 886.8,427.9 885.6,427.3 884.4,427.4 883.2,426.8 882.1,427.0 880.9,426.6 879.7,426.9 878.5,426.1 877.4,427.0 876.2,426.9 875.0,426.9 873.8,427.1 872.7,427.6 871.5,427.8 870.3,427.5 869.1,427.5 867.9,427.5 866.8,427.3 865.6,428.0 864.4,427.2 863.2,427.6 862.1,428.0 860.9,427.5 859.7,427.9 858.5,427.1 857.4,427.4 856.2,427.6 855.0,427.2 853.8,427.6 852.7,427.1 851.5,427.5 850.3,427.6 849.1,427.4 847.9,427.7 846.8,427.6 845.6,427.7 844.4,427.7 843.2,427.7 842.1,428.3 840.9,428.1 839.7,427.8 838.5,427.9 837.4,427.6 836.2,427.7 835.0,428.0 833.8,427.8 832.7,427.8 831.5,427.8 830.3,427.7 829.1,427.6 828.0,427.7 826.8,427.3 825.6,427.8 824.4,427.7 823.2,427.7 822.1,427.7 820.9,427.6 819.7,427.7 818.5,427.6 817.4,427.6 816.2,427.6 815.0,428.1 813.8,427.3 812.7,427.4 811.5,427.9 810.3,427.0 809.1,427.0 808.0,427.4 806.8,427.3 805.6,427.3 804.4,428.0 803.3,428.2 802.1,427.9 800.9,427.8 799.7,427.5 798.5,427.8 797.4,427.3 796.2,427.1 795.0,427.5 793.8,427.5 792.7,427.4 791.5,427.5 790.3,427.7 789.1,427.9 788.0,428.2 786.8,428.4 785.6,428.3 784.4,428.0 783.3,427.5 782.1,427.6 780.9,427.5 779.7,427.3 778.6,427.6 777.4,427.6 776.2,427.6 775.0,427.0 773.8,426.8 772.7,426.7 771.5,427.5 770.3,428.0 769.1,427.5 768.0,427.8 766.8,427.5 765.6,428.1 764.4,427.9 763.3,428.2 762.1,428.1 760.9,428.3 759.7,427.6 758.6,428.1 757.4,428.8 756.2,428.2 755.0,427.6 753.8,428.1 752.7,427.9 751.5,427.8 750.3,428.1 749.1,428.3 748.0,428.1 746.8,428.0 745.6,427.4 744.4,427.8 743.3,428.4 742.1,428.6 740.9,428.5 739.7,428.3 738.6,427.6 737.4,428.0 736.2,428.7 735.0,428.8 733.9,429.3 732.7,429.1 731.5,429.1 730.3,428.6 729.1,428.6 728.0,427.9 726.8,427.8 725.6,427.9 724.4,427.7 723.3,428.0 722.1,428.2 720.9,428.3 719.7,428.4 718.6,427.8 717.4,427.9 716.2,427.9 715.0,428.1 713.9,428.3 712.7,428.4 711.5,429.2 710.3,429.1 709.2,429.2 708.0,428.8 706.8,428.4 705.6,428.6 704.4,428.4 703.3,428.6 702.1,428.9 700.9,429.5 699.7,429.2 698.6,428.3 697.4,428.6 696.2,429.0 695.0,428.4 693.9,428.4 692.7,428.8 691.5,428.8 690.3,429.5 689.2,430.2 688.0,430.3 686.8,429.8 685.6,429.6 684.5,429.1 683.3,429.3 682.1,428.8 680.9,428.5 679.7,428.7 678.6,429.1 677.4,429.1 676.2,429.4 675.0,429.1 673.9,428.8 672.7,428.7 671.5,428.8 670.3,429.1 669.2,428.9 668.0,428.9 666.8,429.0 665.6,428.3 664.5,427.9 663.3,428.3 662.1,429.1 660.9,429.0 659.7,429.0 658.6,428.9 657.4,428.7 656.2,428.8 655.0,429.0 653.9,428.4 652.7,429.1 651.5,429.2 650.3,429.2 649.2,429.3 648.0,429.6 646.8,429.5 645.6,429.0 644.5,428.5 643.3,428.3 642.1,428.1 640.9,427.9 639.8,428.6 638.6,428.6 637.4,428.4 636.2,428.7 635.0,428.8 633.9,428.5 632.7,428.8 631.5,429.2 630.3,430.1 629.2,430.1 628.0,429.3 626.8,429.8 625.6,429.2 624.5,429.2 623.3,429.5 622.1,429.1 620.9,429.4 619.8,429.5 618.6,429.2 617.4,428.3 616.2,428.6 615.1,428.5 613.9,428.9 612.7,428.7 611.5,428.5 610.3,428.6 609.2,429.1 608.0,429.4 606.8,429.4 605.6,429.3 604.5,429.5 603.3,429.5 602.1,429.1 600.9,429.2 599.8,429.8 598.6,429.1 597.4,429.2 596.2,429.8 595.1,430.2 593.9,430.1 592.7,429.3 591.5,429.0 590.4,428.9 589.2,428.7 588.0,428.8 586.8,429.2 585.6,429.2 584.5,429.3 583.3,429.6 582.1,429.3 580.9,428.9 579.8,429.3 578.6,428.6 577.4,429.2 576.2,428.6 575.1,428.5 573.9,428.2 572.7,428.8 571.5,429.4 570.4,430.4 569.2,430.3 568.0,430.1 566.8,429.9 565.6,429.3 564.5,429.0 563.3,429.4 562.1,429.5 560.9,429.2 559.8,429.0 558.6,429.4 557.4,429.5 556.2,429.2 555.1,429.7 553.9,429.4 552.7,429.8 551.5,429.6 550.4,429.1 549.2,428.8 548.0,428.7 546.8,428.8 545.7,428.1 544.5,428.9 543.3,428.8 542.1,429.4 540.9,429.9 539.8,430.1 538.6,429.2 537.4,428.8 536.2,429.3 535.1,429.1 533.9,429.8 532.7,429.9 531.5,429.5 530.4,430.3 529.2,429.7 528.0,429.4 526.8,429.3 525.7,429.3 524.5,429.0 523.3,429.3 522.1,429.1 521.0,429.8 519.8,430.0 518.6,429.9 517.4,429.8 516.2,429.8 515.1,429.7 513.9,429.2 512.7,430.0 511.5,430.3 510.4,430.5 509.2,430.4 508.0,430.8 506.8,430.7 505.7,431.3 504.5,431.4 503.3,431.3 502.1,431.9 501.0,431.1 499.8,431.0 498.6,431.0 497.4,430.9 496.3,431.3 495.1,430.6 493.9,430.9 492.7,430.5 491.5,430.6 490.4,430.7 489.2,430.8 488.0,431.2 486.8,431.3 485.7,430.9 484.5,430.7 483.3,430.9 482.1,431.1 481.0,430.6 479.8,430.6 478.6,429.9 477.4,431.0 476.3,431.0 475.1,431.3 473.9,431.6 472.7,431.5 471.5,431.9 470.4,431.6 469.2,431.8 468.0,431.5 466.8,431.6 465.7,431.4 464.5,431.0 463.3,430.9 462.1,430.9 461.0,430.5 459.8,430.1 458.6,430.8 457.4,430.4 456.3,430.8 455.1,431.0 453.9,430.8 452.7,430.9 451.6,430.9 450.4,431.0 449.2,431.1 448.0,430.8 446.8,430.6 445.7,430.9 444.5,430.9 443.3,430.7 442.1,430.9 441.0,430.9 439.8,430.5 438.6,430.3 437.4,431.1 436.3,431.0 435.1,430.2 433.9,430.5 432.7,430.7 431.6,430.8 430.4,431.9 429.2,432.9 428.0,432.4 426.9,432.1 425.7,431.1 424.5,431.2 423.3,429.7 422.1,430.1 421.0,430.8 419.8,430.6 418.6,430.0 417.4,430.0 416.3,430.2 415.1,430.0 413.9,430.1 412.7,429.8 411.6,429.6 410.4,429.9 409.2,430.2 408.0,430.4 406.9,430.3 405.7,430.3 404.5,430.2 403.3,430.7 402.2,430.9 401.0,431.3 399.8,430.7 398.6,430.3 397.4,430.4 396.3,430.7 395.1,430.5 393.9,430.7 392.7,430.4 391.6,430.9 390.4,431.1 389.2,430.8 388.0,430.6 386.9,430.3 385.7,430.7 384.5,431.1 383.3,431.2 382.2,431.7 381.0,431.5 379.8,431.2 378.6,431.2 377.4,431.4 376.3,431.4 375.1,431.3 373.9,431.5 372.7,431.6 371.6,431.8 370.4,431.7 369.2,431.4 368.0,431.4 366.9,431.3 365.7,432.2 364.5,432.1 363.3,431.8 362.2,432.1 361.0,431.6 359.8,432.1 358.6,432.6 357.5,432.2 356.3,431.8 355.1,432.3 353.9,432.3 352.7,431.3 351.6,431.3 350.4,431.5 349.2,431.6 348.0,431.7 346.9,431.9 345.7,431.4 344.5,431.8 343.3,432.3 342.2,432.4 341.0,431.6 339.8,431.7 338.6,431.9 337.5,431.3 336.3,431.2 335.1,430.8 333.9,432.2 332.8,432.0 331.6,431.7 330.4,431.5 329.2,431.7 328.0,431.6 326.9,431.5 325.7,431.4 324.5,432.2 323.3,432.7 322.2,432.9 321.0,432.5 319.8,432.4 318.6,433.0 317.5,433.0 316.3,432.5 315.1,433.1 313.9,432.9 312.8,433.3 311.6,434.2 310.4,434.3 309.2,434.6 308.1,434.4 306.9,435.5 305.7,435.1 304.5,435.1 303.3,436.3 302.2,435.9 301.0,435.4 299.8,436.1 298.6,435.9 297.5,435.6 296.3,435.6 295.1,435.6 293.9,436.2 292.8,436.1 291.6,435.8 290.4,435.9 289.2,435.9 288.1,435.9 286.9,435.6 285.7,435.2 284.5,435.3 283.3,435.7 282.2,435.8 281.0,436.3 279.8,436.1 278.6,435.8 277.5,435.5 276.3,435.8 275.1,435.2 273.9,435.4 272.8,435.2 271.6,435.3 270.4,435.6 269.2,436.0 268.1,435.8 266.9,435.4 265.7,435.6 264.5,435.8 263.4,435.8 262.2,435.6 261.0,435.5 259.8,436.0 258.6,436.6 257.5,436.0 256.3,435.5 255.1,435.9 253.9,435.1 252.8,435.6 251.6,434.9 250.4,434.6 249.2,434.3 248.1,435.0 246.9,435.7 245.7,435.8 244.5,436.6 243.4,436.3 242.2,436.3 241.0,436.3 239.8,436.1 238.7,436.7 237.5,436.5 236.3,435.9 235.1,436.5 233.9,436.5 232.8,436.8 231.6,437.8 230.4,437.7 229.2,437.1 228.1,436.7 226.9,437.7 225.7,438.1 224.5,437.4 223.4,437.2 222.2,436.9 221.0,438.2 219.8,438.2 218.7,438.0 217.5,437.1 216.3,437.2 215.1,437.7 214.0,438.2 212.8,437.6 211.6,437.6 210.4,437.8 209.2,437.8 208.1,437.6 206.9,438.0 205.7,438.4 204.5,438.2 203.4,438.1 202.2,438.7 201.0,439.0 199.8,438.5 198.7,438.6 197.5,438.7 196.3,438.2 195.1,438.2 194.0,438.8 192.8,439.2 191.6,439.7 190.4,440.1 189.2,440.6 188.1,440.6 186.9,441.1 185.7,440.9 184.5,441.0 183.4,440.8 182.2,440.3 181.0,440.2 179.8,440.5 178.7,440.5 177.5,441.0 176.3,441.1 175.1,440.7 174.0,441.1 172.8,441.2 171.6,441.0 170.4,441.9 169.3,441.3 168.1,441.2 166.9,441.0 165.7,440.6 164.5,440.7 163.4,440.9 162.2,441.2 161.0,442.1 159.8,442.0 158.7,441.1 157.5,440.8 156.3,440.1 155.1,439.9 154.0,440.0 152.8,439.5 151.6,439.7 150.4,440.3 149.3,439.5 148.1,439.5 146.9,439.4 145.7,439.8 144.6,439.9 143.4,440.0 142.2,440.0 141.0,439.8 139.8,440.0 138.7,440.7 137.5,441.1 136.3,441.9 135.1,441.9 134.0,443.5 132.8,443.1 131.6,443.1 130.4,443.1 129.3,443.8 128.1,444.4 126.9,444.3 125.7,444.6 124.6,444.8 123.4,445.3 122.2,445.1 121.0,445.3 119.9,445.1 118.7,445.0 117.5,444.8 116.3,443.9 115.1,444.5 114.0,445.3 112.8,445.5 111.6,445.6 110.4,446.1 109.3,445.7 108.1,445.8 106.9,446.2 105.7,446.5 104.6,441.9 103.4,437.6 102.2,434.5 101.0,430.3" fill="#707070" opacity="0.33"/>
<line x1="101.25" y1="418.75" x2="1299.5" y2="418.75" stroke="#000" stroke-width="0.8" opacity="0.55"/>
<rect x="128.44" y="346.25" width="11.29" height="88.25" fill="#808080" fill-opacity="0.72" stroke="#333" stroke-width="0.9"/>
<line x1="128.44" y1="345.00" x2="139.73" y2="335.40" stroke="#111" stroke-width="0.8"/><line x1="128.44" y1="368.70" x2="139.73" y2="359.10" stroke="#111" stroke-width="0.8"/><line x1="128.44" y1="392.40" x2="139.73" y2="382.80" stroke="#111" stroke-width="0.8"/><line x1="128.44" y1="416.10" x2="139.73" y2="406.50" stroke="#111" stroke-width="0.8"/><line x1="128.44" y1="439.80" x2="139.73" y2="430.20" stroke="#111" stroke-width="0.8"/><line x1="128.44" y1="463.50" x2="139.73" y2="453.90" stroke="#111" stroke-width="0.8"/>
<rect x="1258.40" y="346.25" width="6.29" height="88.25" fill="#808080" fill-opacity="0.72" stroke="#333" stroke-width="0.9"/>
<line x1="1258.40" y1="336.74" x2="1264.69" y2="331.39" stroke="#111" stroke-width="0.8"/><line x1="1258.40" y1="360.44" x2="1264.69" y2="355.09" stroke="#111" stroke-width="0.8"/><line x1="1258.40" y1="384.14" x2="1264.69" y2="378.79" stroke="#111" stroke-width="0.8"/><line x1="1258.40" y1="407.84" x2="1264.69" y2="402.49" stroke="#111" stroke-width="0.8"/><line x1="1258.40" y1="431.54" x2="1264.69" y2="426.19" stroke="#111" stroke-width="0.8"/><line x1="1258.40" y1="455.24" x2="1264.69" y2="449.89" stroke="#111" stroke-width="0.8"/>
<polyline points="102.4,407.3 103.8,405.4 104.7,432.8 107.6,381.8 109.4,432.8 111.1,373.3 113.2,401.6 114.4,387.0 115.6,389.4 117.9,432.8 120.3,399.3 121.7,415.8 123.6,370.5 125.3,428.1 127.4,370.0 130.2,397.9 132.1,420.5 133.2,377.6 134.7,420.5 137.8,375.2 140.1,397.9 144.4,384.2 146.3,405.4 148.6,368.1 150.0,397.9 152.4,402.1 154.6,385.6 155.9,415.3 156.9,367.7 159.3,394.1 161.4,370.5 162.8,384.7 164.2,373.3 165.3,385.6 166.4,367.2 167.5,384.2 168.4,374.3 170.3,391.3 173.6,379.5 175.5,392.2 176.9,379.5 178.2,418.2 179.6,356.3 181.7,409.2 183.6,382.3 185.4,415.3 187.6,369.5 189.7,399.8 191.1,382.3 193.0,396.5 194.4,396.0 195.8,407.3 197.2,401.6 198.5,410.1 199.1,384.7 200.8,378.0 201.5,400.7 202.9,367.7 204.3,367.2 206.2,373.3 207.6,396.5 208.6,388.4 209.5,388.0 211.2,377.1 212.3,399.3 214.5,376.6 217.1,410.1 220.7,368.6 222.3,384.2 223.7,384.2 225.5,405.4 227.4,418.2 228.6,368.1 229.9,409.2 231.1,379.5 232.1,386.5 234.3,375.2 235.9,412.5 237.7,385.1 239.0,391.3 240.1,382.3 242.5,405.4 243.9,390.3 245.3,414.4 247.9,387.0 249.4,395.0 251.0,382.3 252.6,399.3 254.3,399.8 256.6,374.7 258.0,386.5 260.7,400.7 262.6,390.3 263.9,409.7 265.6,370.5 267.2,367.2 269.8,402.1 271.7,382.8 272.7,386.5 273.6,382.8 274.6,392.2 276.5,383.7 278.1,379.5 279.8,385.6 281.5,392.2 282.8,382.8 285.2,362.0 287.5,392.7 289.7,377.1 292.2,382.8 294.7,404.0 296.8,368.1 298.2,396.5 299.6,394.1 300.5,396.9 302.4,392.2 303.8,394.1 306.4,412.0 308.1,393.1 309.5,391.3 312.3,359.2 314.2,395.0 315.6,403.1 319.4,386.5 323.2,384.2 325.1,395.0 327.0,390.3 328.8,402.1 331.2,384.7 332.6,384.7 334.5,395.0 336.4,394.6 339.5,383.7 341.1,393.1 343.5,384.7 344.1,388.4 345.1,379.1 346.3,371.2 347.5,370.1 348.6,375.2 349.8,380.1 351.0,394.5 352.2,405.6 353.3,406.9 354.5,388.8 355.7,386.6 356.9,392.8 358.0,394.7 359.2,405.0 360.4,411.8 361.6,410.6 362.7,411.0 363.9,405.4 365.1,405.4 366.3,385.3 367.5,397.5 368.6,414.1 369.8,396.6 371.0,383.0 372.2,388.9 373.3,368.8 374.5,367.6 375.7,375.3 376.9,387.8 378.0,393.4 379.2,400.7 380.4,398.8 381.6,397.6 382.7,398.9 383.9,408.2 385.1,399.9 386.3,386.4 387.4,387.1 388.6,380.3 389.8,388.4 391.0,393.7 392.2,386.4 393.3,384.8 394.5,398.9 395.7,384.9 396.9,367.5 398.0,375.2 399.2,386.8 400.4,383.2 401.6,381.3 402.7,375.5 403.8,372.4 405.2,385.1 407.1,374.3 409.0,381.8 410.9,382.3 412.1,373.8 413.2,383.2 415.6,372.4 417.0,380.4 418.4,381.8 420.3,385.1 422.7,371.0 424.1,385.6 426.0,386.1 427.7,393.6 430.7,383.7 432.1,383.2 434.5,368.1 437.3,380.4 438.7,381.3 440.6,389.8 441.7,379.9 443.9,392.2 446.3,368.6 448.1,380.4 449.8,369.1 451.9,374.3 453.3,369.5 455.7,379.9 456.6,378.0 459.0,387.0 460.4,386.5 461.8,393.6 465.1,376.2 466.6,378.0 468.6,363.9 470.8,371.9 472.2,371.0 473.9,382.3 476.9,364.8 478.4,371.9 479.3,370.0 481.9,380.4 483.6,366.7 485.0,391.3 485.9,388.9 487.8,364.8 489.7,384.2 492.0,370.5 493.5,382.8 495.8,352.6 498.2,369.5 499.1,368.6 500.5,378.5 502.9,370.0 504.3,375.7 507.6,359.6 510.9,380.9 512.3,375.2 513.3,377.1 514.2,375.2 516.9,382.8 519.4,374.3 521.3,372.9 522.7,378.5 524.6,371.4 526.3,368.6 527.6,382.8 530.0,372.4 531.6,385.6 533.5,382.3 535.4,387.5 537.1,372.4 538.2,379.0 542.0,375.2 543.9,357.3 547.2,395.0 548.6,386.5 549.7,386.1 552.2,367.2 554.7,388.9 556.6,372.9 559.5,386.5 560.7,377.1 561.6,393.6 565.1,360.6 566.1,383.7 567.0,371.0 570.8,388.9 572.0,382.3 573.3,393.6 575.5,376.2 576.7,391.3 579.0,381.3 581.2,391.7 582.8,395.5 586.8,374.3 588.7,372.4 590.1,383.7 591.1,380.9 593.4,388.0 596.9,367.2 599.1,377.1 600.5,395.5 602.4,380.9 605.2,379.0 606.4,368.1 608.1,377.6 610.0,374.7 610.9,377.6 613.6,363.9 618.0,382.3 619.9,375.2 622.5,385.6 624.6,379.5 626.2,382.8 628.4,375.2 630.7,373.3 633.1,363.4 634.5,368.1 635.5,367.7 638.3,386.5 639.5,387.5 644.1,370.0 646.3,390.3 648.7,362.0 650.1,362.5 652.5,380.9 653.9,379.9 655.0,381.8 656.8,373.8 659.3,380.4 661.1,375.7 663.7,374.3 665.3,378.0 667.5,365.3 670.3,381.8 672.2,380.9 674.4,383.7 676.9,367.7 677.9,367.7 679.5,374.3 682.6,362.5 685.1,376.2 686.3,364.8 688.9,372.9 690.4,369.1 693.2,382.3 696.3,374.3 699.1,364.4 700.0,364.8 702.7,390.3 706.2,368.1 709.0,374.3 709.9,372.4 711.2,375.2 713.4,366.2 716.8,384.2 718.2,372.4 720.3,368.1 723.4,380.4 725.5,376.2 727.9,372.4 729.8,375.2 731.4,373.3 734.0,372.9 736.1,367.7 738.3,371.9 739.7,371.0 740.8,372.4 742.3,370.5 743.9,371.9 745.4,362.0 746.5,369.1 749.6,362.0 752.0,377.1 753.4,367.7 755.0,375.2 757.0,357.3 759.0,366.7 760.6,360.6 763.8,376.2 765.2,370.5 766.6,371.9 769.1,367.2 771.1,377.1 772.7,363.9 774.6,368.1 776.0,363.9 778.2,375.7 780.0,365.3 780.9,370.0 782.7,364.4 785.2,372.4 787.5,357.3 789.6,378.0 791.5,361.5 793.7,372.9 794.4,365.3 796.0,375.2 798.4,362.5 801.4,375.2 803.1,365.3 807.6,380.9 809.7,360.6 812.3,372.4 813.2,367.2 815.8,375.2 818.0,365.3 819.2,370.0 821.7,364.4 823.6,368.6 824.6,352.6 825.8,352.6 826.7,371.0 827.7,370.0 828.6,377.1 830.2,371.0 832.6,372.9 834.5,383.7 835.9,361.0 837.8,371.4 839.2,364.8 841.6,384.2 844.4,363.9 845.1,375.2 846.3,365.3 849.6,381.8 851.3,371.0 852.9,378.0 854.3,378.0 858.1,364.8 860.9,375.7 862.6,377.1 864.7,367.7 866.4,367.2 868.0,368.6 869.9,363.9 871.1,371.4 873.2,360.6 874.9,368.1 876.5,362.5 879.0,377.1 881.2,368.1 882.6,371.4 885.0,365.3 886.2,378.5 888.1,361.5 889.5,372.9 890.7,361.0 892.5,372.4 894.1,371.9 895.7,355.4 896.8,372.9 898.2,354.0 900.1,362.5 902.0,366.2 903.2,363.9 904.2,378.0 905.0,362.0 905.9,363.9 908.5,386.5 909.9,357.7 911.3,360.6 912.3,372.9 913.7,362.5 915.6,379.0 917.5,368.1 919.4,367.7 920.6,355.9 922.2,379.9 923.6,379.5 926.0,372.4 928.8,361.5 930.2,365.3 931.3,376.2 933.0,367.7 935.4,367.7 938.2,380.9 939.7,381.3 941.4,386.1 943.0,362.5 944.4,367.7 947.0,362.0 948.6,374.7 950.5,366.2 953.3,382.8 955.7,368.6 959.0,374.3 961.2,368.6 963.4,375.7 964.2,376.2 966.3,354.0 967.5,380.4 969.1,365.3 972.2,378.0 973.2,368.1 974.4,378.0 976.3,365.3 977.9,367.2 979.8,373.8 982.1,375.7 984.0,385.1 988.7,365.3 991.1,374.3 992.0,365.8 994.4,379.5 996.8,366.2 998.2,380.4 999.1,375.2 1001.5,375.7 1002.4,373.3 1003.8,377.1 1006.2,366.2 1008.6,372.4 1009.7,364.4 1011.4,374.7 1012.2,372.9 1013.3,377.6 1014.7,366.7 1016.6,362.5 1019.1,379.5 1021.3,370.5 1023.7,377.6 1025.1,373.3 1027.0,372.9 1028.9,364.4 1030.0,371.4 1030.5,375.2 1032.4,364.4 1034.3,373.8 1036.1,365.3 1037.5,372.4 1039.0,363.9 1041.2,380.9 1042.9,369.5 1044.8,369.1 1046.5,376.2 1047.2,375.7 1048.6,380.9 1050.3,370.5 1051.9,371.0 1053.3,364.8 1055.4,381.8 1057.1,356.3 1058.2,356.3 1060.4,381.8 1062.3,375.7 1063.5,375.2 1065.1,362.0 1067.3,383.7 1069.2,365.8 1070.8,383.2 1072.0,377.1 1074.1,376.6 1076.5,370.0 1077.7,381.3 1080.2,363.4 1082.6,378.0 1083.7,370.0 1086.2,386.5 1088.3,376.2 1090.9,391.3 1094.4,370.0 1096.8,393.1 1099.1,379.0 1100.5,386.5 1102.6,362.5 1103.8,391.7 1106.4,371.0 1108.6,391.3 1110.2,372.4 1111.4,375.2 1114.2,367.2 1115.8,375.2 1118.0,364.8 1120.4,373.8 1122.7,377.6 1125.1,360.6 1126.2,380.4 1127.4,371.4 1130.5,372.9 1132.2,370.5 1133.6,370.5 1135.5,359.6 1137.8,373.3 1139.2,355.4 1141.1,373.8 1142.5,364.8 1144.9,377.1 1146.3,379.0 1147.5,385.6 1149.6,373.3 1152.0,378.0 1155.0,373.3 1155.5,373.8 1157.7,362.7 1159.1,376.0 1160.5,361.1 1162.4,357.7 1164.9,371.0 1167.7,363.3 1169.7,374.9 1172.1,358.3 1174.4,370.5 1176.0,371.0 1178.8,360.5 1180.4,383.2 1182.1,378.2 1183.8,384.9 1186.3,360.5 1188.2,375.4 1189.6,361.1 1192.1,373.2 1193.7,367.7 1195.4,372.1 1196.7,366.0 1197.9,377.1 1200.4,367.7 1202.0,367.1 1204.2,356.1 1205.4,357.7 1206.2,377.7 1207.6,361.1 1209.6,373.8 1210.7,371.0 1212.9,378.2 1214.8,369.9 1216.4,372.1 1217.5,371.6 1220.3,377.1 1222.0,375.4 1223.6,378.8 1225.8,366.6 1227.3,379.3 1228.8,366.6 1231.4,379.3 1233.6,373.2 1235.5,371.6 1238.0,382.1 1239.9,364.9 1241.9,376.0 1243.9,364.4 1246.1,381.0 1248.5,371.0 1250.2,377.1 1251.3,367.7 1252.4,381.5 1254.3,366.6 1255.7,387.1 1257.9,363.8 1259.6,377.1 1261.3,373.2 1262.9,374.9 1265.1,361.6 1267.4,374.9 1269.6,367.7 1271.2,374.3 1273.4,364.4 1275.7,366.0 1277.9,379.3 1279.5,372.1 1281.2,373.8 1283.7,364.4 1285.6,377.7 1286.7,374.3 1287.5,378.2 1289.3,368.8 1290.8,372.1 1292.8,367.7 1294.5,362.2 1296.1,368.2 1299.2,368.8" fill="none" stroke="#0000ff" stroke-width="1.2" stroke-linejoin="round"/>
<line x1="374.21" y1="348.25" x2="374.21" y2="432.5" stroke="#111" stroke-width="0.75" stroke-dasharray="1.9 1.3"/>
</g>
<rect x="101.25" y="348.25" width="1198.25" height="84.25" fill="none" stroke="#222" stroke-width="0.8"/>
<line x1="107.50" y1="432.5" x2="107.50" y2="435.7" stroke="#222" stroke-width="0.8"/>
<text x="107.50" y="446.90" class="s" font-size="9.3" fill="#111" text-anchor="middle" >3500</text>
<line x1="166.31" y1="432.5" x2="166.31" y2="435.7" stroke="#222" stroke-width="0.8"/>
<text x="166.31" y="446.90" class="s" font-size="9.3" fill="#111" text-anchor="middle" >3600</text>
<line x1="225.12" y1="432.5" x2="225.12" y2="435.7" stroke="#222" stroke-width="0.8"/>
<text x="225.12" y="446.90" class="s" font-size="9.3" fill="#111" text-anchor="middle" >3700</text>
<line x1="283.94" y1="432.5" x2="283.94" y2="435.7" stroke="#222" stroke-width="0.8"/>
<text x="283.94" y="446.90" class="s" font-size="9.3" fill="#111" text-anchor="middle" >3800</text>
<line x1="342.75" y1="432.5" x2="342.75" y2="435.7" stroke="#222" stroke-width="0.8"/>
<text x="342.75" y="446.90" class="s" font-size="9.3" fill="#111" text-anchor="middle" >3900</text>
<line x1="401.56" y1="432.5" x2="401.56" y2="435.7" stroke="#222" stroke-width="0.8"/>
<text x="401.56" y="446.90" class="s" font-size="9.3" fill="#111" text-anchor="middle" >4000</text>
<line x1="460.38" y1="432.5" x2="460.38" y2="435.7" stroke="#222" stroke-width="0.8"/>
<text x="460.38" y="446.90" class="s" font-size="9.3" fill="#111" text-anchor="middle" >4100</text>
<line x1="519.19" y1="432.5" x2="519.19" y2="435.7" stroke="#222" stroke-width="0.8"/>
<text x="519.19" y="446.90" class="s" font-size="9.3" fill="#111" text-anchor="middle" >4200</text>
<line x1="578.00" y1="432.5" x2="578.00" y2="435.7" stroke="#222" stroke-width="0.8"/>
<text x="578.00" y="446.90" class="s" font-size="9.3" fill="#111" text-anchor="middle" >4300</text>
<line x1="636.81" y1="432.5" x2="636.81" y2="435.7" stroke="#222" stroke-width="0.8"/>
<text x="636.81" y="446.90" class="s" font-size="9.3" fill="#111" text-anchor="middle" >4400</text>
<line x1="695.62" y1="432.5" x2="695.62" y2="435.7" stroke="#222" stroke-width="0.8"/>
<text x="695.62" y="446.90" class="s" font-size="9.3" fill="#111" text-anchor="middle" >4500</text>
<line x1="754.44" y1="432.5" x2="754.44" y2="435.7" stroke="#222" stroke-width="0.8"/>
<text x="754.44" y="446.90" class="s" font-size="9.3" fill="#111" text-anchor="middle" >4600</text>
<line x1="813.25" y1="432.5" x2="813.25" y2="435.7" stroke="#222" stroke-width="0.8"/>
<text x="813.25" y="446.90" class="s" font-size="9.3" fill="#111" text-anchor="middle" >4700</text>
<line x1="872.06" y1="432.5" x2="872.06" y2="435.7" stroke="#222" stroke-width="0.8"/>
<text x="872.06" y="446.90" class="s" font-size="9.3" fill="#111" text-anchor="middle" >4800</text>
<line x1="930.88" y1="432.5" x2="930.88" y2="435.7" stroke="#222" stroke-width="0.8"/>
<text x="930.88" y="446.90" class="s" font-size="9.3" fill="#111" text-anchor="middle" >4900</text>
<line x1="989.69" y1="432.5" x2="989.69" y2="435.7" stroke="#222" stroke-width="0.8"/>
<text x="989.69" y="446.90" class="s" font-size="9.3" fill="#111" text-anchor="middle" >5000</text>
<line x1="1048.50" y1="432.5" x2="1048.50" y2="435.7" stroke="#222" stroke-width="0.8"/>
<text x="1048.50" y="446.90" class="s" font-size="9.3" fill="#111" text-anchor="middle" >5100</text>
<line x1="1107.31" y1="432.5" x2="1107.31" y2="435.7" stroke="#222" stroke-width="0.8"/>
<text x="1107.31" y="446.90" class="s" font-size="9.3" fill="#111" text-anchor="middle" >5200</text>
<line x1="1166.12" y1="432.5" x2="1166.12" y2="435.7" stroke="#222" stroke-width="0.8"/>
<text x="1166.12" y="446.90" class="s" font-size="9.3" fill="#111" text-anchor="middle" >5300</text>
<line x1="1224.94" y1="432.5" x2="1224.94" y2="435.7" stroke="#222" stroke-width="0.8"/>
<text x="1224.94" y="446.90" class="s" font-size="9.3" fill="#111" text-anchor="middle" >5400</text>
<line x1="1283.75" y1="432.5" x2="1283.75" y2="435.7" stroke="#222" stroke-width="0.8"/>
<text x="1283.75" y="446.90" class="s" font-size="9.3" fill="#111" text-anchor="middle" >5500</text>
<line x1="98.05" y1="418.75" x2="101.25" y2="418.75" stroke="#222" stroke-width="0.8"/>
<text x="94.45" y="422.25" class="s" font-size="9.3" fill="#111" text-anchor="end" >0.0</text>
<line x1="98.05" y1="394.00" x2="101.25" y2="394.00" stroke="#222" stroke-width="0.8"/>
<text x="94.45" y="397.50" class="s" font-size="9.3" fill="#111" text-anchor="end" >2.5</text>
<line x1="98.05" y1="369.25" x2="101.25" y2="369.25" stroke="#222" stroke-width="0.8"/>
<text x="94.45" y="372.75" class="s" font-size="9.3" fill="#111" text-anchor="end" >5.0</text>
<text x="107.70" y="345.90" class="s" font-size="9.6" fill="#111">e</text><text x="113.61" y="342.06" class="s" font-size="6.72" fill="#111">−17</text><text x="128.09" y="345.90" class="s" font-size="9.6" fill="#111">x2</text><text x="139.88" y="345.90" class="si" font-size="9.6" fill="#111">Å</text>
<rect x="513.0" y="450.3" width="17" height="6" fill="#ff0000"/>
<text x="537.0" y="456.2" class="s" font-size="7.6" fill="#111">Ly<tspan class="si">α</tspan></text>
<rect x="567.0" y="450.3" width="17" height="6" fill="#008000"/>
<text x="590.60" y="456.20" class="s" font-size="7.6" fill="#111" text-anchor="start" >OII</text>
<rect x="620.0" y="450.3" width="17" height="6" fill="#8a2be2"/>
<text x="643.20" y="456.20" class="s" font-size="7.6" fill="#111" text-anchor="start" >CIV</text>
<rect x="674.8" y="450.3" width="17" height="6" fill="#800080"/>
<text x="698.00" y="456.20" class="s" font-size="7.6" fill="#111" text-anchor="start" >CIII</text>
<rect x="726.3" y="450.3" width="17" height="6" fill="#ff00ff"/>
<text x="749.60" y="456.20" class="s" font-size="7.6" fill="#111" text-anchor="start" >MgII</text>
<rect x="782.5" y="450.3" width="17" height="6" fill="#ffa500"/>
<text x="805.60" y="456.20" class="s" font-size="7.6" fill="#111" text-anchor="start" >HeII</text>
<rect x="837.3" y="450.3" width="17" height="6" fill="#87ceeb"/>
<text x="860.00" y="456.20" class="s" font-size="7.6" fill="#111" text-anchor="start" >(K)CaII</text>
</g>
<g id="stamps">
<clipPath id="cpS1"><rect x="70.0" y="532.6" width="148" height="147.79999999999995"/></clipPath>
<g clip-path="url(#cpS1)">
<rect x="70.0" y="532.6" width="148" height="147.79999999999995" filter="url(#nzHsc)"/>
<ellipse cx="140.92" cy="607.62" rx="30.34" ry="28.82" fill="url(#gal)"/>
<ellipse cx="73.68" cy="621.56" rx="14.76" ry="27.88" fill="url(#gal2)"/>
<circle cx="117.96" cy="556.78" r="12.30" fill="none" stroke="#444" stroke-width="1.05" opacity="0.8"/>
<circle cx="142.07" cy="558.91" r="12.30" fill="none" stroke="#444" stroke-width="1.05" opacity="0.8"/>
<circle cx="165.52" cy="562.19" r="12.30" fill="none" stroke="#444" stroke-width="1.05" opacity="0.8"/>
<circle cx="103.86" cy="574.82" r="12.30" fill="none" stroke="#444" stroke-width="1.05" opacity="0.8"/>
<circle cx="127.47" cy="577.94" r="12.30" fill="none" stroke="#444" stroke-width="1.05" opacity="0.8"/>
<circle cx="150.92" cy="581.54" r="12.30" fill="none" stroke="#444" stroke-width="1.05" opacity="0.8"/>
<circle cx="175.20" cy="583.84" r="12.30" fill="none" stroke="#444" stroke-width="1.05" opacity="0.8"/>
<circle cx="112.55" cy="597.62" r="12.30" fill="none" stroke="#444" stroke-width="1.05" opacity="0.8"/>
<circle cx="184.22" cy="606.80" r="12.30" fill="none" stroke="#444" stroke-width="1.05" opacity="0.8"/>
<circle cx="98.94" cy="615.82" r="12.30" fill="none" stroke="#444" stroke-width="1.05" opacity="0.8"/>
<circle cx="168.96" cy="625.66" r="12.30" fill="none" stroke="#444" stroke-width="1.05" opacity="0.8"/>
<circle cx="192.91" cy="627.79" r="12.30" fill="none" stroke="#444" stroke-width="1.05" opacity="0.8"/>
<circle cx="107.63" cy="639.60" r="12.30" fill="none" stroke="#444" stroke-width="1.05" opacity="0.8"/>
<circle cx="132.06" cy="641.24" r="12.30" fill="none" stroke="#444" stroke-width="1.05" opacity="0.8"/>
<circle cx="154.86" cy="644.03" r="12.30" fill="none" stroke="#444" stroke-width="1.05" opacity="0.8"/>
<circle cx="178.80" cy="647.96" r="12.30" fill="none" stroke="#444" stroke-width="1.05" opacity="0.8"/>
<circle cx="136.98" cy="600.08" r="12.30" fill="none" stroke="#0000ff" stroke-width="1.2"/>
<circle cx="159.94" cy="602.86" r="12.30" fill="none" stroke="#ffa500" stroke-width="1.2"/>
<circle cx="121.24" cy="618.94" r="12.30" fill="none" stroke="#ff0000" stroke-width="1.2"/>
<circle cx="145.84" cy="623.20" r="12.30" fill="none" stroke="#00ff00" stroke-width="1.2"/>
<path d="M141.00,606.80h6.4M144.20,603.60v6.4" stroke="#ff0000" stroke-width="1" fill="none"/>
</g>
<rect x="95.00" y="557.60" width="98.40" height="98.40" fill="none" stroke="#ff0000" stroke-width="1.35"/>
<text x="144.20" y="545.91" class="s" font-size="11.0" fill="#ff0000" text-anchor="middle" >N</text>
<text x="76.96" y="610.80" class="s" font-size="11.0" fill="#ff0000" text-anchor="start" >E</text>
<rect x="70.0" y="532.6" width="148.0" height="147.79999999999995" fill="none" stroke="#222" stroke-width="1.1"/>
<text x="144.20" y="526.20" class="s" font-size="13.0" fill="#000" text-anchor="middle" >Fiber Positions</text>
<line x1="78.60" y1="680.4" x2="78.60" y2="683.6" stroke="#111" stroke-width="1"/>
<line x1="66.8" y1="672.40" x2="70.0" y2="672.40" stroke="#111" stroke-width="1"/>
<text x="78.60" y="696.80" class="s" font-size="11.0" fill="#111" text-anchor="middle" >−4</text>
<text x="62.00" y="676.70" class="s" font-size="11.0" fill="#111" text-anchor="end" >−4</text>
<line x1="111.40" y1="680.4" x2="111.40" y2="683.6" stroke="#111" stroke-width="1"/>
<line x1="66.8" y1="639.60" x2="70.0" y2="639.60" stroke="#111" stroke-width="1"/>
<text x="111.40" y="696.80" class="s" font-size="11.0" fill="#111" text-anchor="middle" >−2</text>
<text x="62.00" y="643.90" class="s" font-size="11.0" fill="#111" text-anchor="end" >−2</text>
<line x1="144.20" y1="680.4" x2="144.20" y2="683.6" stroke="#111" stroke-width="1"/>
<line x1="66.8" y1="606.80" x2="70.0" y2="606.80" stroke="#111" stroke-width="1"/>
<text x="144.20" y="696.80" class="s" font-size="11.0" fill="#111" text-anchor="middle" >0</text>
<text x="62.00" y="611.10" class="s" font-size="11.0" fill="#111" text-anchor="end" >0</text>
<line x1="177.00" y1="680.4" x2="177.00" y2="683.6" stroke="#111" stroke-width="1"/>
<line x1="66.8" y1="574.00" x2="70.0" y2="574.00" stroke="#111" stroke-width="1"/>
<text x="177.00" y="696.80" class="s" font-size="11.0" fill="#111" text-anchor="middle" >2</text>
<text x="62.00" y="578.30" class="s" font-size="11.0" fill="#111" text-anchor="end" >2</text>
<line x1="209.80" y1="680.4" x2="209.80" y2="683.6" stroke="#111" stroke-width="1"/>
<line x1="66.8" y1="541.20" x2="70.0" y2="541.20" stroke="#111" stroke-width="1"/>
<text x="209.80" y="696.80" class="s" font-size="11.0" fill="#111" text-anchor="middle" >4</text>
<text x="62.00" y="545.50" class="s" font-size="11.0" fill="#111" text-anchor="end" >4</text>
<text x="144.20" y="707.40" class="s" font-size="11.0" fill="#111" text-anchor="middle" xml:space="preserve">arcsecs</text>
<clipPath id="cpS2"><rect x="255.5" y="532.6" width="148" height="147.79999999999995"/></clipPath>
<g clip-path="url(#cpS2)">
<rect x="255.5" y="532.6" width="148" height="147.79999999999995" fill="#3a558c"/>
<g filter="url(#blur2)">
<polygon points="275.6,611.7 298.5,606.8 308.4,629.8 305.1,654.4 313.3,682.2 293.6,682.2 282.1,654.4" fill="#433e85" opacity="0.9"/>
<polygon points="252.6,529.7 288.7,529.7 305.1,554.3 283.8,559.2 272.3,562.5 252.6,554.3" fill="#2f6b8e" opacity="0.9"/>
<polygon points="290.3,529.7 341.2,529.7 344.5,547.8 308.4,556.0" fill="#2c728e" opacity="0.9"/>
<polygon points="288.7,529.7 318.2,529.7 313.3,537.9 298.5,541.2 289.5,538.7" fill="#440154" opacity="1.0"/>
<polygon points="252.6,556.0 272.3,564.2 283.9,560.9 305.8,559.2 324.1,595.3 317.4,606.8 293.9,606.8 289.8,578.6 286.6,573.2 272.3,573.2 264.8,585.5 264.8,601.9 275.6,621.6 252.6,636.3" fill="#440154" opacity="1.0"/>
<polygon points="340.9,529.7 396.0,529.7 398.4,558.4 386.0,580.2 386.8,608.4 379.2,607.8 365.8,578.6 350.9,553.5" fill="#440154" opacity="1.0"/>
<polygon points="341.7,657.1 379.2,634.5 384.3,655.5 400.2,683.9 351.0,683.9" fill="#440154" opacity="1.0"/>
<polygon points="337.1,612.5 346.1,611.7 346.9,622.4 337.9,622.4" fill="#440154" opacity="0.95"/>
<polygon points="252.6,633.0 269.0,642.9 252.6,656.0" fill="#440154" opacity="0.8"/>
<polygon points="307.4,555.1 344.1,546.8 367.6,583.5 379.2,608.6 377.6,628.8 357.6,635.3 345.8,622.1 346.6,612.0 337.4,606.8 329.0,600.2 324.1,593.7" fill="#238a8d" opacity="0.95"/>
<polygon points="314.9,559.2 334.6,557.6 355.9,590.4 369.1,616.6 357.6,623.2 344.5,601.9 329.7,587.1" fill="#1f9e89" opacity="0.95"/>
<ellipse cx="323.1" cy="572.4" rx="6.9" ry="14.8" fill="#35b779" opacity="0.95" transform="rotate(-30 323.1 572.4)"/>
<polygon points="268.2,575.6 284.6,574.0 289.5,590.4 287.1,605.2 272.3,606.8 265.7,593.7" fill="#26828e" opacity="0.95"/>
<ellipse cx="277.2" cy="589.6" rx="6.2" ry="10.2" fill="#35b779" opacity="0.9" transform="rotate(15 277.2 589.6)"/>
<polygon points="309.0,628.8 329.0,618.6 344.1,625.3 344.1,643.7 320.7,650.4 307.4,642.1" fill="#238a8d" opacity="0.95"/>
<ellipse cx="324.8" cy="635.5" rx="9.0" ry="8.2" fill="#35b779" opacity="0.9" transform="rotate(0 324.8 635.5)"/>
<polygon points="252.6,662.1 283.9,655.5 305.8,662.1 317.4,683.9 252.6,683.9" fill="#26828e" opacity="0.95"/>
<ellipse cx="292.0" cy="674.0" rx="16.4" ry="8.2" fill="#35b779" opacity="0.9" transform="rotate(15 292.0 674.0)"/>
<polygon points="384.3,628.8 406.8,622.1 406.8,665.5 391.0,662.1 380.9,645.3" fill="#238a8d" opacity="0.95"/>
<ellipse cx="398.6" cy="643.7" rx="9.8" ry="13.1" fill="#6ece58" opacity="0.95" transform="rotate(10 398.6 643.7)"/>
<polygon points="393.7,575.6 406.8,569.1 406.8,616.6 392.0,611.7" fill="#2a788e" opacity="0.9"/>
<ellipse cx="402.7" cy="600.2" rx="4.9" ry="13.1" fill="#1f9e89" opacity="0.85" transform="rotate(0 402.7 600.2)"/>
</g>
<g filter="url(#blur1)">
<ellipse cx="399.4" cy="644.5" rx="4.3" ry="6.6" fill="#fde725" opacity="0.9" transform="rotate(10 399.4 644.5)"/>
<ellipse cx="295.8" cy="675.7" rx="6.6" ry="3.6" fill="#b5de2b" opacity="0.9" transform="rotate(15 295.8 675.7)"/>
<ellipse cx="324.3" cy="635.5" rx="3.3" ry="3.3" fill="#6ece58" opacity="0.85" transform="rotate(0 324.3 635.5)"/>
</g>
</g>
<rect x="280.50" y="557.60" width="98.40" height="98.40" fill="none" stroke="#ff0000" stroke-width="1.35"/>
<text x="329.70" y="545.91" class="s" font-size="11.0" fill="#ff0000" text-anchor="middle" >N</text>
<text x="262.46" y="610.80" class="s" font-size="11.0" fill="#ff0000" text-anchor="start" >E</text>
<path d="M292.80,606.80H321.50M337.90,606.80H366.60M329.70,569.90V598.60M329.70,615.00V643.70" stroke="#ff0000" stroke-width="1.3" fill="none"/>
<rect x="255.5" y="532.6" width="148.0" height="147.79999999999995" fill="none" stroke="#222" stroke-width="1.1"/>
<text x="329.70" y="526.20" class="s" font-size="13.0" fill="#000" text-anchor="middle" >Lineflux Map</text>
<line x1="264.10" y1="680.4" x2="264.10" y2="683.6" stroke="#111" stroke-width="1"/>
<line x1="252.3" y1="672.40" x2="255.5" y2="672.40" stroke="#111" stroke-width="1"/>
<text x="264.10" y="696.80" class="s" font-size="11.0" fill="#111" text-anchor="middle" >−4</text>
<text x="247.50" y="676.70" class="s" font-size="11.0" fill="#111" text-anchor="end" >−4</text>
<line x1="296.90" y1="680.4" x2="296.90" y2="683.6" stroke="#111" stroke-width="1"/>
<line x1="252.3" y1="639.60" x2="255.5" y2="639.60" stroke="#111" stroke-width="1"/>
<text x="296.90" y="696.80" class="s" font-size="11.0" fill="#111" text-anchor="middle" >−2</text>
<text x="247.50" y="643.90" class="s" font-size="11.0" fill="#111" text-anchor="end" >−2</text>
<line x1="329.70" y1="680.4" x2="329.70" y2="683.6" stroke="#111" stroke-width="1"/>
<line x1="252.3" y1="606.80" x2="255.5" y2="606.80" stroke="#111" stroke-width="1"/>
<text x="329.70" y="696.80" class="s" font-size="11.0" fill="#111" text-anchor="middle" >0</text>
<text x="247.50" y="611.10" class="s" font-size="11.0" fill="#111" text-anchor="end" >0</text>
<line x1="362.50" y1="680.4" x2="362.50" y2="683.6" stroke="#111" stroke-width="1"/>
<line x1="252.3" y1="574.00" x2="255.5" y2="574.00" stroke="#111" stroke-width="1"/>
<text x="362.50" y="696.80" class="s" font-size="11.0" fill="#111" text-anchor="middle" >2</text>
<text x="247.50" y="578.30" class="s" font-size="11.0" fill="#111" text-anchor="end" >2</text>
<line x1="395.30" y1="680.4" x2="395.30" y2="683.6" stroke="#111" stroke-width="1"/>
<line x1="252.3" y1="541.20" x2="255.5" y2="541.20" stroke="#111" stroke-width="1"/>
<text x="395.30" y="696.80" class="s" font-size="11.0" fill="#111" text-anchor="middle" >4</text>
<text x="247.50" y="545.50" class="s" font-size="11.0" fill="#111" text-anchor="end" >4</text>
<text x="329.70" y="707.40" class="s" font-size="11.0" fill="#111" text-anchor="middle" xml:space="preserve">s/b: 0.18 +/- 0.085</text>
<clipPath id="cpS3"><rect x="440.6" y="532.6" width="148" height="147.79999999999995"/></clipPath>
<g clip-path="url(#cpS3)">
<rect x="440.6" y="532.6" width="148" height="147.79999999999995" filter="url(#nzHsc)"/>
<ellipse cx="511.52" cy="607.62" rx="30.34" ry="28.82" fill="url(#gal)"/>
<ellipse cx="444.28" cy="621.56" rx="14.76" ry="27.88" fill="url(#gal2)"/>
</g>
<rect x="465.60" y="557.60" width="98.40" height="98.40" fill="none" stroke="#ff0000" stroke-width="1.35"/>
<text x="514.80" y="545.91" class="s" font-size="11.0" fill="#ff0000" text-anchor="middle" >N</text>
<text x="447.56" y="610.80" class="s" font-size="11.0" fill="#ff0000" text-anchor="start" >E</text>
<ellipse cx="513.16" cy="606.80" rx="31.49" ry="30.01" fill="none" stroke="#ffd700" stroke-width="1.2"/>
<path d="M477.90,606.80H506.60M523.00,606.80H551.70M514.80,569.90V598.60M514.80,615.00V643.70" stroke="#ff0000" stroke-width="1.3" fill="none"/>
<rect x="506.60" y="598.60" width="13.12" height="13.12" fill="none" stroke="#0000ff" stroke-width="1.1"/>
<rect x="440.6" y="532.6" width="148.0" height="147.79999999999995" fill="none" stroke="#222" stroke-width="1.1"/>
<text x="514.80" y="526.20" class="s" font-size="13.0" fill="#000" text-anchor="middle" >HSC(26.2) r</text>
<line x1="449.20" y1="680.4" x2="449.20" y2="683.6" stroke="#111" stroke-width="1"/>
<line x1="437.40000000000003" y1="672.40" x2="440.6" y2="672.40" stroke="#111" stroke-width="1"/>
<text x="449.20" y="696.80" class="s" font-size="11.0" fill="#111" text-anchor="middle" >−4</text>
<text x="432.60" y="676.70" class="s" font-size="11.0" fill="#111" text-anchor="end" >−4</text>
<line x1="482.00" y1="680.4" x2="482.00" y2="683.6" stroke="#111" stroke-width="1"/>
<line x1="437.40000000000003" y1="639.60" x2="440.6" y2="639.60" stroke="#111" stroke-width="1"/>
<text x="482.00" y="696.80" class="s" font-size="11.0" fill="#111" text-anchor="middle" >−2</text>
<text x="432.60" y="643.90" class="s" font-size="11.0" fill="#111" text-anchor="end" >−2</text>
<line x1="514.80" y1="680.4" x2="514.80" y2="683.6" stroke="#111" stroke-width="1"/>
<line x1="437.40000000000003" y1="606.80" x2="440.6" y2="606.80" stroke="#111" stroke-width="1"/>
<text x="514.80" y="696.80" class="s" font-size="11.0" fill="#111" text-anchor="middle" >0</text>
<text x="432.60" y="611.10" class="s" font-size="11.0" fill="#111" text-anchor="end" >0</text>
<line x1="547.60" y1="680.4" x2="547.60" y2="683.6" stroke="#111" stroke-width="1"/>
<line x1="437.40000000000003" y1="574.00" x2="440.6" y2="574.00" stroke="#111" stroke-width="1"/>
<text x="547.60" y="696.80" class="s" font-size="11.0" fill="#111" text-anchor="middle" >2</text>
<text x="432.60" y="578.30" class="s" font-size="11.0" fill="#111" text-anchor="end" >2</text>
<line x1="580.40" y1="680.4" x2="580.40" y2="683.6" stroke="#111" stroke-width="1"/>
<line x1="437.40000000000003" y1="541.20" x2="440.6" y2="541.20" stroke="#111" stroke-width="1"/>
<text x="580.40" y="696.80" class="s" font-size="11.0" fill="#111" text-anchor="middle" >4</text>
<text x="432.60" y="545.50" class="s" font-size="11.0" fill="#111" text-anchor="end" >4</text>
<text x="514.80" y="707.40" class="s" font-size="11.0" fill="#111" text-anchor="middle" xml:space="preserve">m:20.1  re:1.9"  s:0.1"</text>
<text x="514.80" y="719.10" class="s" font-size="11.0" fill="#111" text-anchor="middle" xml:space="preserve">EWr: 1, PLAE: 0.999</text>
</g>
<g id="hsc">
<text x="70.00" y="499.10" class="m" font-size="12.975" fill="#000" xml:space="preserve">HSC-DEX : Possible Matches = 1 (within +/- 3")  P(LAE)/P(OII): 0.999</text><text x="603.37" y="494.81" class="s" font-size="9.08" fill="#000">1.261</text><text x="603.37" y="502.79" class="s" font-size="9.08" fill="#000">0.811</text><text x="629.37" y="499.10" class="m" font-size="12.975" fill="#000" xml:space="preserve"> (r)</text>
</g><g id="table">
<text x="70.00" y="786.00" class="m" font-size="12.975" fill="#000" xml:space="preserve">Separation</text>
<text x="70.00" y="800.68" class="m" font-size="12.975" fill="#000" xml:space="preserve">Match score</text>
<text x="70.00" y="815.36" class="m" font-size="12.975" fill="#000" xml:space="preserve">RA, Dec</text>
<text x="70.00" y="830.04" class="m" font-size="12.975" fill="#000" xml:space="preserve">Spec z</text>
<text x="70.00" y="844.72" class="m" font-size="12.975" fill="#000" xml:space="preserve">Photo z</text>
<text x="70.00" y="859.40" class="m" font-size="12.975" fill="#000" xml:space="preserve">Est LyA rest-EW</text>
<text x="70.00" y="874.08" class="m" font-size="12.975" fill="#000" xml:space="preserve">mag</text>
<text x="70.00" y="888.76" class="m" font-size="12.975" fill="#000" xml:space="preserve">P(LAE)/P(OII)</text>
<text x="287.00" y="779.30" class="m" font-size="12.975" fill="#0000ff" xml:space="preserve">0.156147"</text>
<text x="287.00" y="793.90" class="m" font-size="12.975" fill="#0000ff" xml:space="preserve">1.000</text>
<text x="287.00" y="808.40" class="m" font-size="12.975" fill="#0000ff" xml:space="preserve">163.725576, 51.414809</text>
<text x="287.00" y="822.90" class="m" font-size="12.975" fill="#0000ff" xml:space="preserve">N/A</text>
<text x="287.00" y="837.50" class="m" font-size="12.975" fill="#0000ff" xml:space="preserve">N/A</text>
<text x="287.00" y="855.00" class="m" font-size="12.975" fill="#0000ff" xml:space="preserve">1.20(</text><text x="326.06" y="855.00" class="s" font-size="12.975" fill="#0000ff">±</text><text x="336.93" y="855.00" class="m" font-size="12.975" fill="#0000ff" xml:space="preserve">0.30)</text><text x="375.99" y="855.00" class="si" font-size="12.975" fill="#0000ff">Å</text>
<text x="287.00" y="869.70" class="m" font-size="12.975" fill="#0000ff" xml:space="preserve">20.20(20.19,20.21)R</text>
<text x="287.00" y="886.50" class="m" font-size="12.975" fill="#0000ff" xml:space="preserve">1.041</text><text x="328.26" y="882.51" class="s" font-size="9.08" fill="#0000ff">1.276</text><text x="328.26" y="890.49" class="s" font-size="9.08" fill="#0000ff">0.814</text>
</g>
<text x="939.00" y="821.30" class="m" font-size="12.975" fill="#000" xml:space="preserve">Phot z plot not available.</text>
</svg>
</body></html>
